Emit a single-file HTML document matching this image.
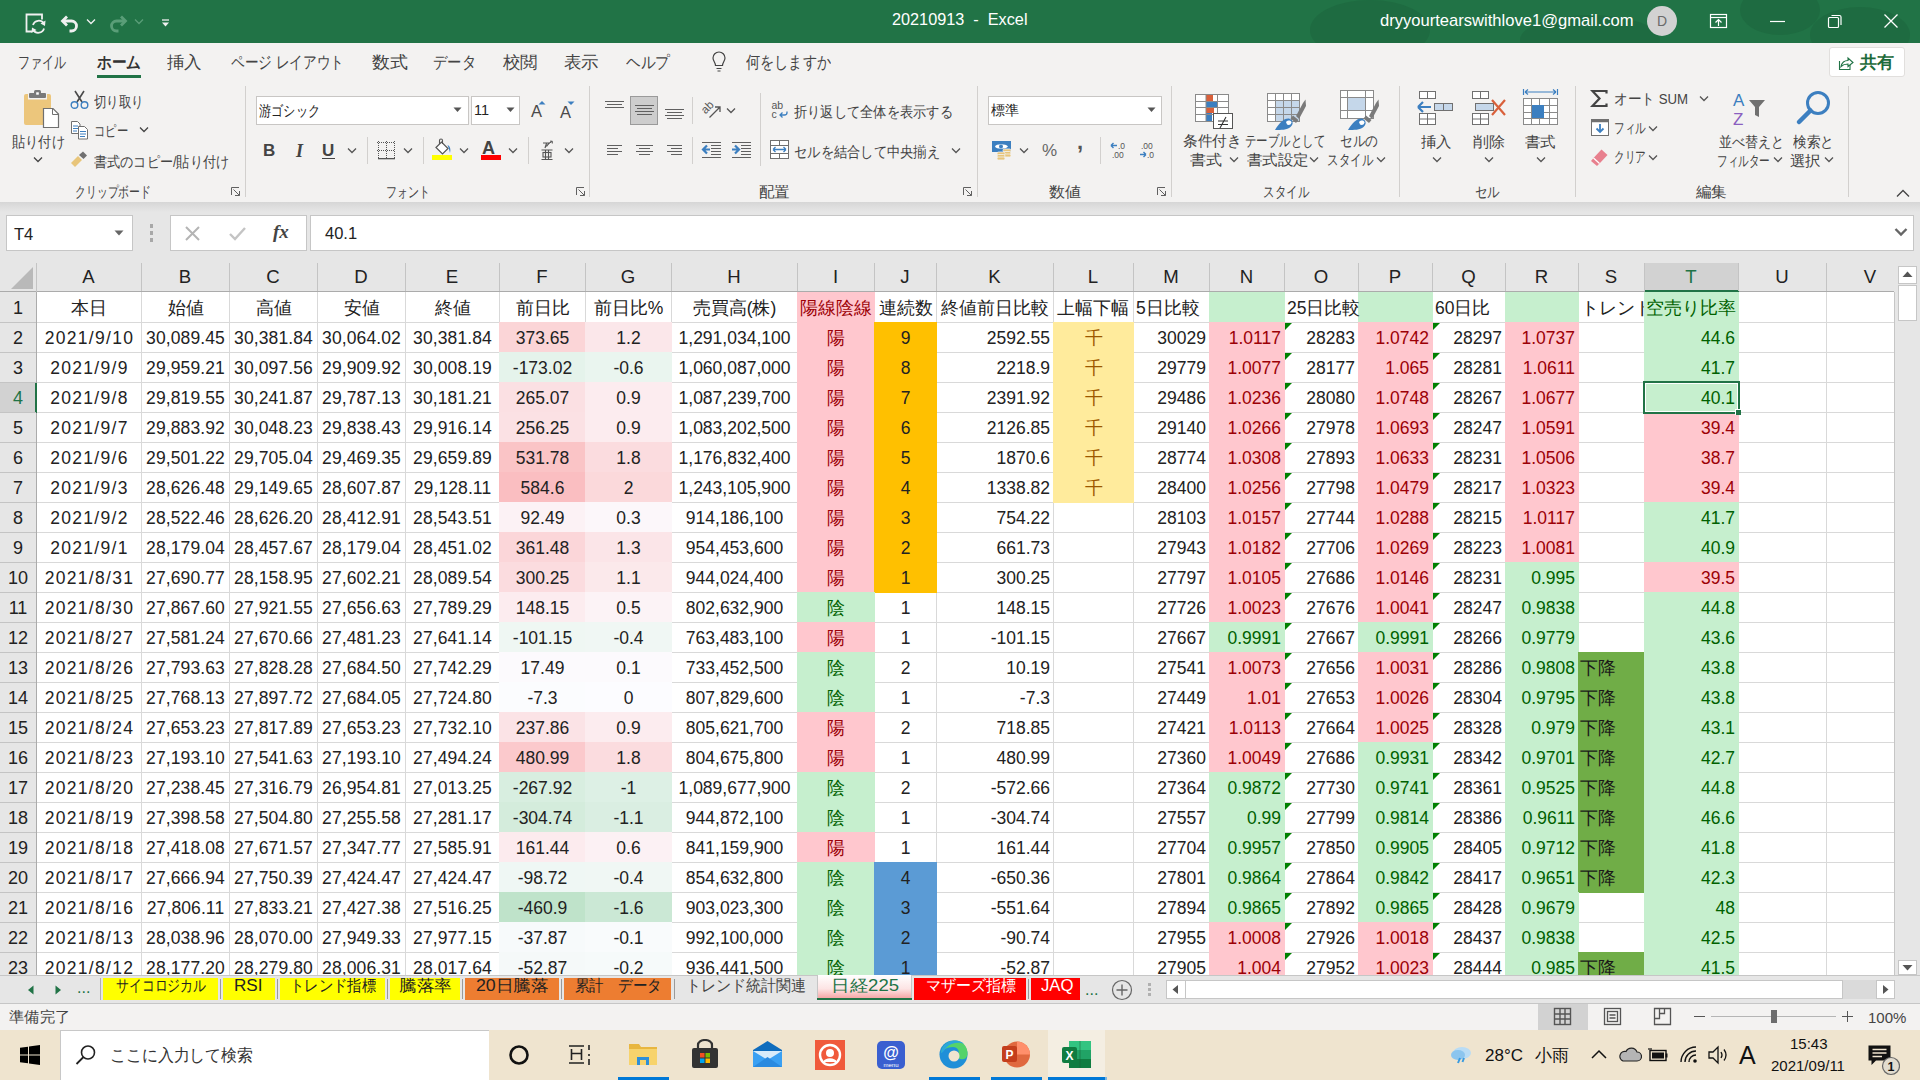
<!DOCTYPE html><html><head><meta charset="utf-8"><style>
*{margin:0;padding:0;box-sizing:border-box}
html,body{width:1920px;height:1080px;overflow:hidden;background:#fff;font-family:"Liberation Sans", sans-serif}
body>div,body>span{position:absolute}
.t{position:absolute;white-space:nowrap;line-height:1}
.c{position:absolute;white-space:nowrap;overflow:hidden;font-size:17.5px;line-height:30px;height:30px;color:#222}
.hl{position:absolute;background:#d4d4d4}
</style></head><body><div style="left:0px;top:0px;width:1920px;height:43px;background:#217346;overflow:hidden"></div>
<svg style="position:absolute;left:1300px;top:0px;" width="620" height="43" viewBox="0 0 620 43"><g fill="#1e6a40" opacity="0.8"><ellipse cx="70" cy="30" rx="60" ry="30"/><ellipse cx="290" cy="40" rx="70" ry="25"/><ellipse cx="480" cy="10" rx="40" ry="25"/><ellipse cx="560" cy="35" rx="50" ry="28"/></g></svg>
<svg style="position:absolute;left:24px;top:12px;" width="24" height="23" viewBox="0 0 24 23"><g fill="none" stroke="#f0f0f0" stroke-width="1.8"><path d="M8 19.5H2.5V2.5H18V7.5"/><path d="M9 13A6 6 0 0 1 19.8 11.5"/><path d="M20 16.5A6 6 0 0 1 9.2 18"/></g><path d="M21.5 8.5L21 14L16.5 11.5Z" fill="#f0f0f0"/><path d="M7.5 21L8 15.5L12.5 18Z" fill="#f0f0f0"/></svg>
<svg style="position:absolute;left:59px;top:14px;" width="22" height="19" viewBox="0 0 22 19"><path d="M8 2.5L3.5 7L8 11.5" fill="none" stroke="#f0f0f0" stroke-width="2.8" stroke-linejoin="miter"/><path d="M4 7H12.5a5 5 0 0 1 0 10H10.5" fill="none" stroke="#f0f0f0" stroke-width="2.8"/></svg>
<svg style="position:absolute;left:86px;top:18px;" width="10" height="7" viewBox="0 0 10 7"><path d="M1 1.5L5 5.5L9 1.5" fill="none" stroke="#f0f0f0" stroke-width="1.3"/></svg>
<svg style="position:absolute;left:107px;top:14px;" width="22" height="19" viewBox="0 0 22 19"><path d="M14 2.5L18.5 7L14 11.5" fill="none" stroke="#5a9e78" stroke-width="2.8" stroke-linejoin="miter"/><path d="M18 7H9.5a5 5 0 0 0 0 10H11.5" fill="none" stroke="#5a9e78" stroke-width="2.8"/></svg>
<svg style="position:absolute;left:134px;top:18px;" width="10" height="7" viewBox="0 0 10 7"><path d="M1 1.5L5 5.5L9 1.5" fill="none" stroke="#5a9e78" stroke-width="1.3"/></svg>
<svg style="position:absolute;left:161px;top:19px;" width="9" height="9" viewBox="0 0 9 9"><path d="M1 1H8" stroke="#f0f0f0" stroke-width="1.3"/><path d="M1 3.5H8L4.5 7.5Z" fill="#f0f0f0"/></svg>
<div class="t" id="m0" style="left:892px;top:11px;font-size:17px;color:#fff;white-space:pre;transform:scaleX(0.9558);transform-origin:0 0;">20210913  -  Excel</div>
<div class="t" id="m1" style="left:1380px;top:12px;font-size:17px;color:#fff;;transform:scaleX(0.9747);transform-origin:0 0;">dryyourtearswithlove1@gmail.com</div>
<div style="left:1647px;top:6px;width:30px;height:30px;border-radius:50%;background:#d2d2d2;color:#6a6a6a;font-size:14px;line-height:30px;text-align:center">D</div>
<svg style="position:absolute;left:1708px;top:11px;" width="22" height="20" viewBox="0 0 22 20"><g fill="none" stroke="#fff" stroke-width="1.2"><rect x="2.5" y="3.5" width="16" height="13"/><path d="M2.5 6.5H18.5"/><path d="M10.5 15V9M7.5 11.5L10.5 8.5L13.5 11.5"/></g></svg>
<svg style="position:absolute;left:1768px;top:14px;" width="20" height="14" viewBox="0 0 20 14"><path d="M2 7.5H17" stroke="#fff" stroke-width="1.2"/></svg>
<svg style="position:absolute;left:1825px;top:11px;" width="20" height="20" viewBox="0 0 20 20"><g fill="none" stroke="#fff" stroke-width="1.2"><rect x="3.5" y="6.5" width="10" height="10" rx="1"/><path d="M6.5 4.5H14.5a1.5 1.5 0 0 1 1.5 1.5V14"/></g></svg>
<svg style="position:absolute;left:1881px;top:11px;" width="20" height="20" viewBox="0 0 20 20"><path d="M3.5 3.5L16.5 16.5M16.5 3.5L3.5 16.5" stroke="#fff" stroke-width="1.3"/></svg>
<div style="left:0px;top:43px;width:1920px;height:159px;background:#f3f2f1"></div>
<div class="t" id="m2" style="left:18px;top:54px;font-size:17px;color:#444;;transform:scaleX(0.7059);transform-origin:0 0;">ファイル</div>
<div class="t" id="m3" style="left:97px;top:54px;font-size:17px;color:#333;font-weight:bold;;transform:scaleX(0.8627);transform-origin:0 0;">ホーム</div>
<div class="t" id="m4" style="left:167px;top:54px;font-size:17px;color:#444;;transform:scaleX(1.0294);transform-origin:0 0;">挿入</div>
<div class="t" id="m5" style="left:231px;top:54px;font-size:17px;color:#444;;transform:scaleX(0.8029);transform-origin:0 0;">ページ レイアウト</div>
<div class="t" id="m6" style="left:372px;top:54px;font-size:17px;color:#444;;transform:scaleX(1.0588);transform-origin:0 0;">数式</div>
<div class="t" id="m7" style="left:433px;top:54px;font-size:17px;color:#444;;transform:scaleX(0.8431);transform-origin:0 0;">データ</div>
<div class="t" id="m8" style="left:503px;top:54px;font-size:17px;color:#444;;transform:scaleX(1.0294);transform-origin:0 0;">校閲</div>
<div class="t" id="m9" style="left:564px;top:54px;font-size:17px;color:#444;;transform:scaleX(1.0294);transform-origin:0 0;">表示</div>
<div class="t" id="m10" style="left:626px;top:54px;font-size:17px;color:#444;;transform:scaleX(0.8627);transform-origin:0 0;">ヘルプ</div>
<div class="t" id="m11" style="left:746px;top:54px;font-size:17px;color:#444;;transform:scaleX(0.8333);transform-origin:0 0;">何をしますか</div>
<div style="left:97px;top:75px;width:44px;height:3px;background:#217346"></div>
<svg style="position:absolute;left:710px;top:51px;" width="18" height="22" viewBox="0 0 18 22"><g fill="none" stroke="#444" stroke-width="1.2"><path d="M5.5 14.5C5.5 11.5 3 10 3 7a6 6 0 0 1 12 0c0 3-2.5 4.5-2.5 7.5Z"/><path d="M6.5 17.5H11.5M7.5 20H10.5"/></g></svg>
<div style="left:1829px;top:47px;width:76px;height:30px;background:#fff;border:1px solid #e1dfdd;border-radius:3px"></div>
<svg style="position:absolute;left:1837px;top:53px;" width="20" height="20" viewBox="0 0 20 20"><g fill="none" stroke="#217346" stroke-width="1.1"><path d="M2.5 8V16.5H13V12"/><path d="M4 13.5C5 9 8 7.5 11 7.5V5L16 9.5L11 13.5V11C8 11 6 11.5 4 13.5Z"/></g></svg>
<div class="t" style="left:1860px;top:54px;font-size:17px;color:#1d6b3a;font-weight:bold">共有</div>
<div style="left:245px;top:86px;width:1px;height:111px;background:#d2d0ce"></div>
<div style="left:589px;top:86px;width:1px;height:111px;background:#d2d0ce"></div>
<div style="left:977px;top:86px;width:1px;height:111px;background:#d2d0ce"></div>
<div style="left:1171px;top:86px;width:1px;height:111px;background:#d2d0ce"></div>
<div style="left:1399px;top:86px;width:1px;height:111px;background:#d2d0ce"></div>
<div style="left:1575px;top:86px;width:1px;height:111px;background:#d2d0ce"></div>
<div style="left:1848px;top:86px;width:1px;height:111px;background:#d2d0ce"></div>
<svg style="position:absolute;left:20px;top:88px;" width="42" height="42" viewBox="0 0 42 42"><rect x="4" y="6" width="27" height="31" rx="2" fill="#ecc67c"/><rect x="8" y="4" width="19" height="7.5" fill="#f3f2f1"/><rect x="9" y="5" width="17" height="5" rx="1" fill="#7a7a7a"/><rect x="14" y="2" width="7" height="5" rx="1.5" fill="#7a7a7a"/><rect x="16.2" y="4.3" width="2.6" height="2.4" fill="#fff"/><path d="M23.5 20.5H33L38.5 26V39.5H23.5Z" fill="#fff" stroke="#707070" stroke-width="1.2"/><path d="M32.5 20.5V26.5H38.5" fill="none" stroke="#707070" stroke-width="1"/></svg>
<div class="t" id="m12" style="left:12px;top:135px;font-size:14.5px;color:#444;;transform:scaleX(0.8833);transform-origin:0 0;">貼り付け</div>
<svg style="position:absolute;left:33px;top:156px;" width="10" height="7" viewBox="0 0 10 7"><path d="M1 1.5L5 5.5L9 1.5" fill="none" stroke="#444" stroke-width="1.3"/></svg>
<svg style="position:absolute;left:70px;top:90px;" width="19" height="20" viewBox="0 0 19 20"><g fill="none" stroke="#4a4a4a" stroke-width="1.6"><path d="M5 1L12 12M14 1L7 12"/></g><g fill="none" stroke="#3c7fc0" stroke-width="1.4"><circle cx="4.5" cy="15" r="3.3"/><circle cx="14.5" cy="15" r="3.3"/></g></svg>
<div class="t" id="m13" style="left:94px;top:95px;font-size:14.5px;color:#444;;transform:scaleX(0.8333);transform-origin:0 0;">切り取り</div>
<svg style="position:absolute;left:70px;top:120px;" width="20" height="20" viewBox="0 0 20 20"><g fill="#fff" stroke="#707070" stroke-width="1"><path d="M1.5 1.5H7.5L10 4V13.5H1.5Z"/><path d="M8.5 6.5H14.5L17.5 9.5V19H8.5Z"/></g><g stroke="#3c7fc0" stroke-width="1"><path d="M3 6H8M3 8.5H8M3 11H7M10 11.5H16M10 14H16M10 16.5H15"/></g></svg>
<div class="t" id="m14" style="left:94px;top:124px;font-size:14.5px;color:#444;;transform:scaleX(0.7556);transform-origin:0 0;">コピー</div>
<svg style="position:absolute;left:139px;top:126px;" width="10" height="7" viewBox="0 0 10 7"><path d="M1 1.5L5 5.5L9 1.5" fill="none" stroke="#444" stroke-width="1.3"/></svg>
<svg style="position:absolute;left:70px;top:151px;" width="20" height="17" viewBox="0 0 20 17"><path d="M1 12L8 5L12 9L5 16Z" fill="#e8c57a"/><path d="M9 4L13 0.5L17 4.5L13.5 8Z" fill="#707070"/></svg>
<div class="t" id="m15" style="left:94px;top:155px;font-size:14.5px;color:#444;;transform:scaleX(0.8764);transform-origin:0 0;">書式のコピー/貼り付け</div>
<div class="t" id="m16" style="left:75px;top:185px;font-size:14.5px;color:#444;;transform:scaleX(0.7238);transform-origin:0 0;">クリップボード</div>
<svg style="position:absolute;left:230px;top:186px;" width="11" height="11" viewBox="0 0 11 11"><g fill="none" stroke="#606060" stroke-width="1"><path d="M1.5 9V1.5H9"/><path d="M3.5 3.5L9.5 9.5M5 9.5H9.5V5"/></g></svg>
<div style="left:256px;top:96px;width:213px;height:29px;background:#fff;border:1px solid #c8c6c4"></div>
<div class="t" id="m17" style="left:259px;top:104px;font-size:14.5px;color:#222;;transform:scaleX(0.8133);transform-origin:0 0;">游ゴシック</div>
<svg style="position:absolute;left:453px;top:107px;" width="9" height="6" viewBox="0 0 9 6"><path d="M0.5 0.5H8.5L4.5 5Z" fill="#555"/></svg>
<div style="left:471px;top:96px;width:49px;height:29px;background:#fff;border:1px solid #c8c6c4"></div>
<div class="t" style="left:474px;top:103px;font-size:14.5px;color:#222;">11</div>
<svg style="position:absolute;left:506px;top:107px;" width="9" height="6" viewBox="0 0 9 6"><path d="M0.5 0.5H8.5L4.5 5Z" fill="#555"/></svg>
<div class="t" style="left:531px;top:103px;font-size:16.5px;color:#4a4a4a;">A</div>
<svg style="position:absolute;left:538px;top:100px;" width="8" height="5" viewBox="0 0 8 5"><path d="M0.5 4.5L4 1L7.5 4.5Z" fill="#3c7fc0"/></svg>
<div class="t" style="left:560px;top:104px;font-size:16.5px;color:#4a4a4a;">A</div>
<svg style="position:absolute;left:567px;top:101px;" width="8" height="5" viewBox="0 0 8 5"><path d="M0.5 0.5L4 4L7.5 0.5Z" fill="#3c7fc0"/></svg>
<div class="t" style="left:263px;top:142px;font-size:17px;color:#444;font-weight:bold">B</div>
<div class="t" style="left:296px;top:142px;font-size:18px;color:#444;font-style:italic;font-family:'Liberation Serif',serif;font-weight:bold">I</div>
<div class="t" style="left:322px;top:142px;font-size:17px;color:#444;font-weight:bold">U</div>
<div style="left:322px;top:158px;width:13px;height:1px;background:#444"></div>
<svg style="position:absolute;left:347px;top:147px;" width="10" height="7" viewBox="0 0 10 7"><path d="M1 1.5L5 5.5L9 1.5" fill="none" stroke="#555" stroke-width="1.3"/></svg>
<svg style="position:absolute;left:403px;top:147px;" width="10" height="7" viewBox="0 0 10 7"><path d="M1 1.5L5 5.5L9 1.5" fill="none" stroke="#555" stroke-width="1.3"/></svg>
<svg style="position:absolute;left:459px;top:147px;" width="10" height="7" viewBox="0 0 10 7"><path d="M1 1.5L5 5.5L9 1.5" fill="none" stroke="#555" stroke-width="1.3"/></svg>
<svg style="position:absolute;left:508px;top:147px;" width="10" height="7" viewBox="0 0 10 7"><path d="M1 1.5L5 5.5L9 1.5" fill="none" stroke="#555" stroke-width="1.3"/></svg>
<svg style="position:absolute;left:564px;top:147px;" width="10" height="7" viewBox="0 0 10 7"><path d="M1 1.5L5 5.5L9 1.5" fill="none" stroke="#555" stroke-width="1.3"/></svg>
<div style="left:367px;top:137px;width:1px;height:27px;background:#d2d0ce"></div>
<div style="left:423px;top:137px;width:1px;height:27px;background:#d2d0ce"></div>
<div style="left:528px;top:137px;width:1px;height:27px;background:#d2d0ce"></div>
<svg style="position:absolute;left:377px;top:141px;" width="19" height="19" viewBox="0 0 19 19"><rect x="0" y="1" width="1" height="1" fill="#555"/><rect x="0" y="9" width="1" height="1" fill="#555"/><rect x="1" y="0" width="1" height="1" fill="#555"/><rect x="1" y="2" width="1" height="1" fill="#555"/><rect x="1" y="4" width="1" height="1" fill="#555"/><rect x="1" y="6" width="1" height="1" fill="#555"/><rect x="1" y="8" width="1" height="1" fill="#555"/><rect x="1" y="10" width="1" height="1" fill="#555"/><rect x="1" y="12" width="1" height="1" fill="#555"/><rect x="1" y="14" width="1" height="1" fill="#555"/><rect x="1" y="16" width="1" height="1" fill="#555"/><rect x="2" y="1" width="1" height="1" fill="#555"/><rect x="2" y="9" width="1" height="1" fill="#555"/><rect x="4" y="1" width="1" height="1" fill="#555"/><rect x="4" y="9" width="1" height="1" fill="#555"/><rect x="6" y="1" width="1" height="1" fill="#555"/><rect x="6" y="9" width="1" height="1" fill="#555"/><rect x="8" y="1" width="1" height="1" fill="#555"/><rect x="8" y="9" width="1" height="1" fill="#555"/><rect x="9" y="0" width="1" height="1" fill="#555"/><rect x="9" y="2" width="1" height="1" fill="#555"/><rect x="9" y="4" width="1" height="1" fill="#555"/><rect x="9" y="6" width="1" height="1" fill="#555"/><rect x="9" y="8" width="1" height="1" fill="#555"/><rect x="9" y="10" width="1" height="1" fill="#555"/><rect x="9" y="12" width="1" height="1" fill="#555"/><rect x="9" y="14" width="1" height="1" fill="#555"/><rect x="9" y="16" width="1" height="1" fill="#555"/><rect x="10" y="1" width="1" height="1" fill="#555"/><rect x="10" y="9" width="1" height="1" fill="#555"/><rect x="12" y="1" width="1" height="1" fill="#555"/><rect x="12" y="9" width="1" height="1" fill="#555"/><rect x="14" y="1" width="1" height="1" fill="#555"/><rect x="14" y="9" width="1" height="1" fill="#555"/><rect x="16" y="1" width="1" height="1" fill="#555"/><rect x="16" y="9" width="1" height="1" fill="#555"/><rect x="17" y="0" width="1" height="1" fill="#555"/><rect x="17" y="2" width="1" height="1" fill="#555"/><rect x="17" y="4" width="1" height="1" fill="#555"/><rect x="17" y="6" width="1" height="1" fill="#555"/><rect x="17" y="8" width="1" height="1" fill="#555"/><rect x="17" y="10" width="1" height="1" fill="#555"/><rect x="17" y="12" width="1" height="1" fill="#555"/><rect x="17" y="14" width="1" height="1" fill="#555"/><rect x="17" y="16" width="1" height="1" fill="#555"/><rect x="1" y="17" width="17" height="1.3" fill="#555"/></svg>
<svg style="position:absolute;left:431px;top:138px;" width="22" height="23" viewBox="0 0 22 23"><path d="M5 9.5L10.5 4L17 10.5L11.5 16Z" fill="#fff" stroke="#555" stroke-width="1.2"/><path d="M8.5 6V2.5A1.5 1.5 0 0 1 11.5 2.5V6" fill="none" stroke="#555" stroke-width="1.1"/><path d="M16.5 7C19 8 20 11 19 15L18 11Z" fill="#3c7fc0"/><rect x="1" y="17" width="20" height="5" fill="#ffff00"/></svg>
<div class="t" style="left:482px;top:139px;font-size:18px;color:#444;font-weight:bold">A</div>
<div style="left:481px;top:155px;width:20px;height:5px;background:#ff0000"></div>
<svg style="position:absolute;left:540px;top:140px;" width="14" height="21" viewBox="0 0 14 21"><path d="M3 3H9L6.5 6.5M6.5 3.5L5 8" fill="none" stroke="#555" stroke-width="1.2"/><path d="M8 4L12 1.5M10 1.2H12.3V3.5" fill="none" stroke="#555" stroke-width="1"/><g stroke="#555" stroke-width="1.1" fill="none"><path d="M1.5 10H12.5M1.5 19.5H12.5"/><rect x="3" y="12.5" width="8" height="4.5"/><path d="M5.5 10V19.5M8.5 10V19.5"/></g></svg>
<div class="t" id="m18" style="left:386px;top:185px;font-size:14.5px;color:#444;;transform:scaleX(0.7333);transform-origin:0 0;">フォント</div>
<svg style="position:absolute;left:575px;top:186px;" width="11" height="11" viewBox="0 0 11 11"><g fill="none" stroke="#606060" stroke-width="1"><path d="M1.5 9V1.5H9"/><path d="M3.5 3.5L9.5 9.5M5 9.5H9.5V5"/></g></svg>
<div style="left:630px;top:96px;width:28px;height:29px;background:#cdcdcd;border:1px solid #9a9a9a"></div>
<svg style="position:absolute;left:0;top:0" width="800" height="170" viewBox="0 0 800 170"><rect x="605" y="101" width="19" height="1" fill="#606060"/><rect x="607" y="104" width="15" height="1" fill="#606060"/><rect x="605" y="107" width="19" height="1" fill="#606060"/></svg>
<svg style="position:absolute;left:0;top:0" width="800" height="170" viewBox="0 0 800 170"><rect x="635" y="105" width="19" height="1" fill="#606060"/><rect x="637" y="108" width="15" height="1" fill="#606060"/><rect x="635" y="111" width="19" height="1" fill="#606060"/><rect x="637" y="114" width="15" height="1" fill="#606060"/></svg>
<svg style="position:absolute;left:0;top:0" width="800" height="170" viewBox="0 0 800 170"><rect x="665" y="109" width="19" height="1" fill="#606060"/><rect x="667" y="112" width="15" height="1" fill="#606060"/><rect x="665" y="115" width="19" height="1" fill="#606060"/><rect x="667" y="118" width="15" height="1" fill="#606060"/></svg>
<svg style="position:absolute;left:0;top:0" width="800" height="170" viewBox="0 0 800 170"><rect x="607" y="145" width="15" height="1" fill="#606060"/><rect x="607" y="148" width="11" height="1" fill="#606060"/><rect x="607" y="151" width="15" height="1" fill="#606060"/><rect x="607" y="154" width="11" height="1" fill="#606060"/></svg>
<svg style="position:absolute;left:0;top:0" width="800" height="170" viewBox="0 0 800 170"><rect x="636" y="145" width="17" height="1" fill="#606060"/><rect x="639" y="148" width="11" height="1" fill="#606060"/><rect x="636" y="151" width="17" height="1" fill="#606060"/><rect x="639" y="154" width="11" height="1" fill="#606060"/></svg>
<svg style="position:absolute;left:0;top:0" width="800" height="170" viewBox="0 0 800 170"><rect x="667" y="145" width="15" height="1" fill="#606060"/><rect x="671" y="148" width="11" height="1" fill="#606060"/><rect x="667" y="151" width="15" height="1" fill="#606060"/><rect x="671" y="154" width="11" height="1" fill="#606060"/></svg>
<svg style="position:absolute;left:0;top:0" width="800" height="170" viewBox="0 0 800 170"><rect x="702" y="142" width="19" height="1" fill="#606060"/><rect x="711" y="145" width="10" height="1" fill="#606060"/><rect x="711" y="148" width="10" height="1" fill="#606060"/><rect x="711" y="151" width="10" height="1" fill="#606060"/><rect x="711" y="154" width="10" height="1" fill="#606060"/><rect x="702" y="157" width="19" height="1" fill="#606060"/></svg>
<svg style="position:absolute;left:0;top:0" width="800" height="170" viewBox="0 0 800 170"><rect x="732" y="142" width="19" height="1" fill="#606060"/><rect x="741" y="145" width="10" height="1" fill="#606060"/><rect x="741" y="148" width="10" height="1" fill="#606060"/><rect x="741" y="151" width="10" height="1" fill="#606060"/><rect x="741" y="154" width="10" height="1" fill="#606060"/><rect x="732" y="157" width="19" height="1" fill="#606060"/></svg>
<svg style="position:absolute;left:701px;top:143px;" width="10" height="14" viewBox="0 0 10 14"><path d="M9 6.5H3M6 2.5L2 6.5L6 10.5" fill="none" stroke="#3c7fc0" stroke-width="2.2"/></svg>
<svg style="position:absolute;left:731px;top:143px;" width="10" height="14" viewBox="0 0 10 14"><path d="M1 6.5H7M4 2.5L8 6.5L4 10.5" fill="none" stroke="#3c7fc0" stroke-width="2.2"/></svg>
<div style="left:692px;top:97px;width:1px;height:27px;background:#d2d0ce"></div>
<div style="left:692px;top:137px;width:1px;height:27px;background:#d2d0ce"></div>
<svg style="position:absolute;left:700px;top:100px;" width="24" height="20" viewBox="0 0 24 20"><text x="0" y="0" font-size="11.5" fill="#555" font-family="Liberation Sans" transform="translate(5.5 14.5) rotate(-45)">ab</text><path d="M9.5 17.5L20 7M15 7H20V12" fill="none" stroke="#555" stroke-width="1.3"/></svg>
<svg style="position:absolute;left:726px;top:107px;" width="10" height="7" viewBox="0 0 10 7"><path d="M1 1.5L5 5.5L9 1.5" fill="none" stroke="#555" stroke-width="1.3"/></svg>
<div style="left:760px;top:93px;width:1px;height:73px;background:#d2d0ce"></div>
<svg style="position:absolute;left:771px;top:100px;" width="18" height="19" viewBox="0 0 18 19"><text x="0.5" y="9" font-size="10.5" fill="#555" font-family="Liberation Sans">ab</text><text x="0.5" y="17.5" font-size="10.5" fill="#555" font-family="Liberation Sans">c</text><path d="M16 11.5V12.5A2.5 2.5 0 0 1 13.5 15H9M11.5 12.5L9 15L11.5 17.5" fill="none" stroke="#3c7fc0" stroke-width="1.3"/></svg>
<div class="t" id="m19" style="left:794px;top:105px;font-size:14.5px;color:#444;;transform:scaleX(0.8833);transform-origin:0 0;">折り返して全体を表示する</div>
<svg style="position:absolute;left:769px;top:139px;" width="21" height="21" viewBox="0 0 21 21"><rect x="1.5" y="1.5" width="18" height="18" fill="#fff" stroke="#707070"/><path d="M1.5 6.5H19.5M1.5 14.5H19.5M10.5 1.5V6.5M10.5 14.5V19.5" stroke="#707070"/><path d="M4 10.5H17M4 10.5L6.5 8M4 10.5L6.5 13M17 10.5L14.5 8M17 10.5L14.5 13" fill="none" stroke="#3c7fc0" stroke-width="1.3"/></svg>
<div class="t" id="m20" style="left:794px;top:145px;font-size:14.5px;color:#444;;transform:scaleX(0.8848);transform-origin:0 0;">セルを結合して中央揃え</div>
<svg style="position:absolute;left:951px;top:147px;" width="10" height="7" viewBox="0 0 10 7"><path d="M1 1.5L5 5.5L9 1.5" fill="none" stroke="#555" stroke-width="1.3"/></svg>
<div class="t" id="m21" style="left:759px;top:185px;font-size:14.5px;color:#444;;transform:scaleX(1.0333);transform-origin:0 0;">配置</div>
<svg style="position:absolute;left:962px;top:186px;" width="11" height="11" viewBox="0 0 11 11"><g fill="none" stroke="#606060" stroke-width="1"><path d="M1.5 9V1.5H9"/><path d="M3.5 3.5L9.5 9.5M5 9.5H9.5V5"/></g></svg>
<div style="left:988px;top:96px;width:174px;height:29px;background:#fff;border:1px solid #c8c6c4"></div>
<div class="t" style="left:991px;top:103px;font-size:14px;color:#222;">標準</div>
<svg style="position:absolute;left:1147px;top:107px;" width="9" height="6" viewBox="0 0 9 6"><path d="M0.5 0.5H8.5L4.5 5Z" fill="#555"/></svg>
<svg style="position:absolute;left:991px;top:140px;" width="22" height="21" viewBox="0 0 22 21"><rect x="1" y="1" width="19" height="11" fill="#3c7fc0"/><path d="M4 6.5C5 3.5 15 3.5 17 6.5C15 9.5 5 9.5 4 6.5Z" fill="#fff"/><circle cx="10" cy="6.5" r="2" fill="#3c7fc0"/><g fill="#e8c57a" stroke="#f3f2f1" stroke-width="0.8"><rect x="12" y="9" width="8" height="3" rx="1.5"/><rect x="12" y="11.5" width="8" height="3" rx="1.5"/><rect x="12" y="14" width="8" height="3" rx="1.5"/><rect x="6" y="12" width="8" height="3" rx="1.5"/><rect x="6" y="14.5" width="8" height="3" rx="1.5"/><rect x="6" y="17" width="8" height="3" rx="1.5"/></g></svg>
<svg style="position:absolute;left:1019px;top:147px;" width="10" height="7" viewBox="0 0 10 7"><path d="M1 1.5L5 5.5L9 1.5" fill="none" stroke="#555" stroke-width="1.3"/></svg>
<div class="t" style="left:1042px;top:142px;font-size:17px;color:#666;">%</div>
<div class="t" style="left:1077px;top:131px;font-size:22px;color:#555;font-weight:bold">,</div>
<div style="left:1100px;top:137px;width:1px;height:27px;background:#d2d0ce"></div>
<svg style="position:absolute;left:1110px;top:141px;" width="20" height="18" viewBox="0 0 20 18"><path d="M1 4.5H7M1 4.5L3.5 2M1 4.5L3.5 7" stroke="#3c7fc0" stroke-width="1.4" fill="none"/><text x="8" y="8" font-size="8.5" fill="#555" font-family="Liberation Sans">.0</text><text x="2" y="17" font-size="8.5" fill="#555" font-family="Liberation Sans">.00</text></svg>
<svg style="position:absolute;left:1139px;top:141px;" width="20" height="18" viewBox="0 0 20 18"><text x="2" y="8" font-size="8.5" fill="#555" font-family="Liberation Sans">.00</text><path d="M1 13.5H7M7 13.5L4.5 11M7 13.5L4.5 16" stroke="#3c7fc0" stroke-width="1.4" fill="none"/><text x="8" y="17" font-size="8.5" fill="#555" font-family="Liberation Sans">.0</text></svg>
<div class="t" id="m22" style="left:1049px;top:185px;font-size:14.5px;color:#444;;transform:scaleX(1.0667);transform-origin:0 0;">数値</div>
<svg style="position:absolute;left:1156px;top:186px;" width="11" height="11" viewBox="0 0 11 11"><g fill="none" stroke="#606060" stroke-width="1"><path d="M1.5 9V1.5H9"/><path d="M3.5 3.5L9.5 9.5M5 9.5H9.5V5"/></g></svg>
<svg style="position:absolute;left:1195px;top:94px;" width="40" height="36" viewBox="0 0 40 36"><g fill="#fff" stroke="#8a8a8a" stroke-width="1"><rect x="0.5" y="0.5" width="33" height="27"/></g><rect x="11" y="1" width="7" height="6" fill="#d9603b"/><rect x="11" y="7" width="11" height="6" fill="#3c7fc0"/><rect x="11" y="13" width="8" height="6" fill="#d9603b"/><rect x="11" y="19" width="6" height="8" fill="#3c7fc0"/><g stroke="#8a8a8a" stroke-width="1"><path d="M0.5 7.5H33.5M0.5 13.5H33.5M0.5 20.5H33.5M11 0.5V27.5M22.5 0.5V27.5"/></g><rect x="18.5" y="19.5" width="19" height="15" fill="#fff" stroke="#555" stroke-width="1"/><path d="M23 27H33M23 30.5H33M31 23L25 34" stroke="#333" stroke-width="1.1"/></svg>
<svg style="position:absolute;left:1267px;top:93px;" width="40" height="38" viewBox="0 0 40 38"><g fill="#fff" stroke="#8a8a8a" stroke-width="1"><rect x="0.5" y="0.5" width="32" height="28"/></g><rect x="9" y="8" width="23" height="20" fill="#c5d7ea"/><g stroke="#8a8a8a" stroke-width="1"><path d="M0.5 7.5H32.5M0.5 14.5H32.5M0.5 21.5H32.5M8.5 0.5V28.5M16.5 0.5V28.5M24.5 0.5V28.5"/></g><path d="M29 23L36 10L38.5 6.5L39 13L32 26Z" fill="#7a7a7a"/><path d="M26 22.5L31.5 27L29 30L23.5 25.5Z" fill="#7a7a7a"/><path d="M8 37C12 30 17 25 22 25.5C26 27 27 31 23.5 34C20 37 14 37 8 37Z" fill="#3c7fc0"/><path d="M19 29C21 27 24 27 24.5 29.5C24 32 21.5 32.5 20 31.5Z" fill="#fff"/></svg>
<svg style="position:absolute;left:1340px;top:90px;" width="42" height="40" viewBox="0 0 42 40"><g fill="#fff" stroke="#8a8a8a" stroke-width="1"><rect x="0.5" y="0.5" width="33" height="28"/></g><rect x="7.5" y="7.5" width="18" height="13" fill="#c5d7ea" stroke="#8a8a8a"/><g stroke="#8a8a8a" stroke-width="1"><path d="M0.5 7.5H33.5M0.5 20.5H33.5M7.5 0.5V28.5M25.5 0.5V28.5"/></g><g transform="translate(0,3)"><path d="M29 23L36 10L38.5 6.5L39 13L32 26Z" fill="#7a7a7a"/><path d="M26 22.5L31.5 27L29 30L23.5 25.5Z" fill="#7a7a7a"/><path d="M8 37C12 30 17 25 22 25.5C26 27 27 31 23.5 34C20 37 14 37 8 37Z" fill="#3c7fc0"/><path d="M19 29C21 27 24 27 24.5 29.5C24 32 21.5 32.5 20 31.5Z" fill="#fff"/></g></svg>
<div class="t" id="m23" style="left:1183px;top:134px;font-size:14.5px;color:#444;;transform:scaleX(0.9833);transform-origin:0 0;">条件付き</div>
<div class="t" id="m24" style="left:1190px;top:153px;font-size:14.5px;color:#444;;transform:scaleX(1.0667);transform-origin:0 0;">書式</div>
<svg style="position:absolute;left:1229px;top:156px;" width="10" height="7" viewBox="0 0 10 7"><path d="M1 1.5L5 5.5L9 1.5" fill="none" stroke="#555" stroke-width="1.3"/></svg>
<div class="t" id="m25" style="left:1245px;top:134px;font-size:14.5px;color:#444;;transform:scaleX(0.7619);transform-origin:0 0;">テーブルとして</div>
<div class="t" id="m26" style="left:1247px;top:153px;font-size:14.5px;color:#444;;transform:scaleX(1.0333);transform-origin:0 0;">書式設定</div>
<svg style="position:absolute;left:1309px;top:156px;" width="10" height="7" viewBox="0 0 10 7"><path d="M1 1.5L5 5.5L9 1.5" fill="none" stroke="#555" stroke-width="1.3"/></svg>
<div class="t" id="m27" style="left:1340px;top:134px;font-size:14.5px;color:#444;;transform:scaleX(0.8444);transform-origin:0 0;">セルの</div>
<div class="t" id="m28" style="left:1327px;top:153px;font-size:14.5px;color:#444;;transform:scaleX(0.7667);transform-origin:0 0;">スタイル</div>
<svg style="position:absolute;left:1376px;top:156px;" width="10" height="7" viewBox="0 0 10 7"><path d="M1 1.5L5 5.5L9 1.5" fill="none" stroke="#555" stroke-width="1.3"/></svg>
<div class="t" id="m29" style="left:1263px;top:185px;font-size:14.5px;color:#444;;transform:scaleX(0.7667);transform-origin:0 0;">スタイル</div>
<svg style="position:absolute;left:1416px;top:90px;" width="38" height="36" viewBox="0 0 38 36"><g fill="#fff" stroke="#707070" stroke-width="1"><rect x="3.5" y="1.5" width="16" height="7"/><path d="M11.5 1.5V8.5"/><rect x="3.5" y="23.5" width="16" height="11"/><path d="M11.5 23.5V34.5M3.5 29H19.5"/></g><rect x="18.5" y="13.5" width="18" height="7" fill="#c5d7ea" stroke="#707070"/><path d="M27.5 13.5V20.5" stroke="#707070"/><path d="M2 17H15M2 17L7 12M2 17L7 22" stroke="#3c7fc0" stroke-width="2.2" fill="none"/></svg>
<svg style="position:absolute;left:1470px;top:90px;" width="38" height="36" viewBox="0 0 38 36"><g fill="#fff" stroke="#707070" stroke-width="1"><rect x="2.5" y="1.5" width="16" height="7"/><path d="M10.5 1.5V8.5"/><rect x="2.5" y="23.5" width="16" height="11"/><path d="M10.5 23.5V34.5M2.5 29H18.5"/></g><rect x="5.5" y="13.5" width="18" height="7" fill="#c5d7ea" stroke="#707070"/><path d="M22 10L35 25M35 10L22 25" stroke="#d9603b" stroke-width="2.2"/></svg>
<svg style="position:absolute;left:1521px;top:88px;" width="40" height="40" viewBox="0 0 40 40"><path d="M4 4H35M4 4L7 1.5M4 4L7 6.5M35 4L32 1.5M35 4L32 6.5M2.5 1V7M36.5 1V7" stroke="#3c7fc0" stroke-width="1.2" fill="none"/><g fill="#fff" stroke="#8a8a8a" stroke-width="1"><rect x="2.5" y="10.5" width="34" height="26"/></g><g stroke="#8a8a8a" stroke-width="1"><path d="M2.5 17.5H36.5M2.5 24.5H36.5M2.5 30.5H36.5M10.5 10.5V36.5M18.5 10.5V36.5M28.5 10.5V36.5"/></g><rect x="11" y="17" width="12" height="13" fill="#3c7fc0"/></svg>
<div class="t" id="m30" style="left:1421px;top:135px;font-size:14.5px;color:#444;;transform:scaleX(1.0333);transform-origin:0 0;">挿入</div>
<div class="t" id="m31" style="left:1473px;top:135px;font-size:14.5px;color:#444;;transform:scaleX(1.0667);transform-origin:0 0;">削除</div>
<div class="t" id="m32" style="left:1525px;top:135px;font-size:14.5px;color:#444;;transform:scaleX(1.0333);transform-origin:0 0;">書式</div>
<svg style="position:absolute;left:1432px;top:156px;" width="10" height="7" viewBox="0 0 10 7"><path d="M1 1.5L5 5.5L9 1.5" fill="none" stroke="#555" stroke-width="1.3"/></svg>
<svg style="position:absolute;left:1484px;top:156px;" width="10" height="7" viewBox="0 0 10 7"><path d="M1 1.5L5 5.5L9 1.5" fill="none" stroke="#555" stroke-width="1.3"/></svg>
<svg style="position:absolute;left:1536px;top:156px;" width="10" height="7" viewBox="0 0 10 7"><path d="M1 1.5L5 5.5L9 1.5" fill="none" stroke="#555" stroke-width="1.3"/></svg>
<div class="t" id="m33" style="left:1475px;top:185px;font-size:14.5px;color:#444;;transform:scaleX(0.8333);transform-origin:0 0;">セル</div>
<svg style="position:absolute;left:1590px;top:89px;" width="20" height="19" viewBox="0 0 20 19"><path d="M16.5 4.5V2H2.5L9.5 9.5L2.5 17H16.5V14.5" fill="none" stroke="#444" stroke-width="2.2" stroke-linejoin="miter"/></svg>
<div class="t" id="m34" style="left:1614px;top:92px;font-size:14.5px;color:#444;;transform:scaleX(0.9108);transform-origin:0 0;">オート SUM</div>
<svg style="position:absolute;left:1699px;top:95px;" width="10" height="7" viewBox="0 0 10 7"><path d="M1 1.5L5 5.5L9 1.5" fill="none" stroke="#555" stroke-width="1.3"/></svg>
<svg style="position:absolute;left:1590px;top:117px;" width="20" height="20" viewBox="0 0 20 20"><rect x="1.5" y="2.5" width="17" height="16" fill="#fff" stroke="#707070"/><path d="M1.5 4H18.5" stroke="#707070" stroke-width="2.5"/><path d="M10 7V15M6.5 11.5L10 15L13.5 11.5" stroke="#3c7fc0" stroke-width="1.8" fill="none"/></svg>
<div class="t" id="m35" style="left:1614px;top:121px;font-size:14.5px;color:#444;;transform:scaleX(0.7111);transform-origin:0 0;">フィル</div>
<svg style="position:absolute;left:1648px;top:125px;" width="10" height="7" viewBox="0 0 10 7"><path d="M1 1.5L5 5.5L9 1.5" fill="none" stroke="#555" stroke-width="1.3"/></svg>
<svg style="position:absolute;left:1590px;top:147px;" width="20" height="19" viewBox="0 0 20 19"><path d="M3.5 11L11.5 2.5L17.5 8L9.5 16.5Z" fill="#e8808e"/><path d="M1 14L3.5 11L9.5 16.5L7 19Z" fill="#e8808e"/><path d="M3.5 11L9.5 16.5" stroke="#fff" stroke-width="1.2"/></svg>
<div class="t" id="m36" style="left:1614px;top:150px;font-size:14.5px;color:#444;;transform:scaleX(0.7111);transform-origin:0 0;">クリア</div>
<svg style="position:absolute;left:1648px;top:154px;" width="10" height="7" viewBox="0 0 10 7"><path d="M1 1.5L5 5.5L9 1.5" fill="none" stroke="#555" stroke-width="1.3"/></svg>
<svg style="position:absolute;left:1731px;top:90px;" width="40" height="38" viewBox="0 0 40 38"><text x="2" y="16" font-size="17" fill="#3c7fc0" font-family="Liberation Sans">A</text><text x="2" y="35" font-size="17" fill="#8b5fc0" font-family="Liberation Sans">Z</text><path d="M18 10H34L28 17V27L24 25V17Z" fill="#707070"/></svg>
<svg style="position:absolute;left:1795px;top:89px;" width="38" height="40" viewBox="0 0 38 40"><circle cx="23" cy="14" r="10.5" fill="none" stroke="#3c7fc0" stroke-width="3"/><path d="M15.5 21.5L4 33" stroke="#3c7fc0" stroke-width="4.5" stroke-linecap="round"/></svg>
<div class="t" id="m37" style="left:1719px;top:135px;font-size:14.5px;color:#444;;transform:scaleX(0.8667);transform-origin:0 0;">並べ替えと</div>
<div class="t" id="m38" style="left:1717px;top:154px;font-size:14.5px;color:#444;;transform:scaleX(0.7067);transform-origin:0 0;">フィルター</div>
<svg style="position:absolute;left:1773px;top:156px;" width="10" height="7" viewBox="0 0 10 7"><path d="M1 1.5L5 5.5L9 1.5" fill="none" stroke="#555" stroke-width="1.3"/></svg>
<div class="t" id="m39" style="left:1793px;top:135px;font-size:14.5px;color:#444;;transform:scaleX(0.9111);transform-origin:0 0;">検索と</div>
<div class="t" id="m40" style="left:1790px;top:154px;font-size:14.5px;color:#444;;transform:scaleX(1.0333);transform-origin:0 0;">選択</div>
<svg style="position:absolute;left:1824px;top:156px;" width="10" height="7" viewBox="0 0 10 7"><path d="M1 1.5L5 5.5L9 1.5" fill="none" stroke="#555" stroke-width="1.3"/></svg>
<div class="t" id="m41" style="left:1696px;top:185px;font-size:14.5px;color:#444;;transform:scaleX(1.0333);transform-origin:0 0;">編集</div>
<svg style="position:absolute;left:1896px;top:189px;" width="14" height="9" viewBox="0 0 14 9"><path d="M1 7.5L7 1.5L13 7.5" fill="none" stroke="#444" stroke-width="1.3"/></svg>
<div style="left:0px;top:202px;width:1920px;height:10px;background:linear-gradient(#d6d6d6,#e6e6e6)"></div>
<div style="left:0px;top:212px;width:1920px;height:51px;background:#e6e6e6"></div>
<div style="left:6px;top:215px;width:127px;height:36px;background:#fff;border:1px solid #c6c6c6"></div>
<div class="t" style="left:14px;top:226px;font-size:16.5px;color:#222;">T4</div>
<svg style="position:absolute;left:114px;top:230px;" width="10" height="6" viewBox="0 0 10 6"><path d="M0.5 0.5H9.5L5 5.5Z" fill="#666"/></svg>
<div style="left:150px;top:224px;width:3px;height:4px;background:#a8a8a8"></div>
<div style="left:150px;top:231px;width:3px;height:4px;background:#a8a8a8"></div>
<div style="left:150px;top:238px;width:3px;height:4px;background:#a8a8a8"></div>
<div style="left:170px;top:215px;width:137px;height:36px;background:#fff;border:1px solid #c6c6c6"></div>
<svg style="position:absolute;left:184px;top:225px;" width="18" height="18" viewBox="0 0 18 18"><path d="M2 2L15 15M15 2L2 15" stroke="#b4b4b4" stroke-width="2"/></svg>
<svg style="position:absolute;left:228px;top:226px;" width="20" height="16" viewBox="0 0 20 16"><path d="M2 8L7 13L17 2" fill="none" stroke="#c4c4c4" stroke-width="2.4"/></svg>
<div class="t" style="left:273px;top:222px;font-size:19px;color:#444;font-family:'Liberation Serif',serif;font-style:italic;font-weight:bold">fx</div>
<div style="left:310px;top:215px;width:1604px;height:36px;background:#fff;border:1px solid #c6c6c6"></div>
<div class="t" style="left:325px;top:225px;font-size:16.5px;color:#222;">40.1</div>
<svg style="position:absolute;left:1894px;top:227px;" width="14" height="10" viewBox="0 0 14 10"><path d="M1.5 2L7 7.5L12.5 2" fill="none" stroke="#666" stroke-width="2.4"/></svg>
<div style="left:0px;top:263px;width:1897px;height:29px;background:#e6e6e6"></div>
<div style="left:0px;top:291px;width:1895px;height:1px;background:#ababab"></div>
<svg style="position:absolute;left:0px;top:263px;" width="36" height="29" viewBox="0 0 36 29"><path d="M33 4V26H11Z" fill="#b9b9b9"/></svg>
<div style="left:36px;top:263px;width:1px;height:29px;background:#c4c4c4"></div>
<div style="left:141px;top:263px;width:1px;height:28px;background:#c4c4c4"></div>
<div class="t" style="left:36px;top:267.5px;width:105px;text-align:center;font-size:18.6px;color:#222">A</div>
<div style="left:229px;top:263px;width:1px;height:28px;background:#c4c4c4"></div>
<div class="t" style="left:141px;top:267.5px;width:88px;text-align:center;font-size:18.6px;color:#222">B</div>
<div style="left:317px;top:263px;width:1px;height:28px;background:#c4c4c4"></div>
<div class="t" style="left:229px;top:267.5px;width:88px;text-align:center;font-size:18.6px;color:#222">C</div>
<div style="left:405px;top:263px;width:1px;height:28px;background:#c4c4c4"></div>
<div class="t" style="left:317px;top:267.5px;width:88px;text-align:center;font-size:18.6px;color:#222">D</div>
<div style="left:499px;top:263px;width:1px;height:28px;background:#c4c4c4"></div>
<div class="t" style="left:405px;top:267.5px;width:94px;text-align:center;font-size:18.6px;color:#222">E</div>
<div style="left:585px;top:263px;width:1px;height:28px;background:#c4c4c4"></div>
<div class="t" style="left:499px;top:267.5px;width:86px;text-align:center;font-size:18.6px;color:#222">F</div>
<div style="left:671px;top:263px;width:1px;height:28px;background:#c4c4c4"></div>
<div class="t" style="left:585px;top:267.5px;width:86px;text-align:center;font-size:18.6px;color:#222">G</div>
<div style="left:797px;top:263px;width:1px;height:28px;background:#c4c4c4"></div>
<div class="t" style="left:671px;top:267.5px;width:126px;text-align:center;font-size:18.6px;color:#222">H</div>
<div style="left:874px;top:263px;width:1px;height:28px;background:#c4c4c4"></div>
<div class="t" style="left:797px;top:267.5px;width:77px;text-align:center;font-size:18.6px;color:#222">I</div>
<div style="left:936px;top:263px;width:1px;height:28px;background:#c4c4c4"></div>
<div class="t" style="left:874px;top:267.5px;width:62px;text-align:center;font-size:18.6px;color:#222">J</div>
<div style="left:1053px;top:263px;width:1px;height:28px;background:#c4c4c4"></div>
<div class="t" style="left:936px;top:267.5px;width:117px;text-align:center;font-size:18.6px;color:#222">K</div>
<div style="left:1133px;top:263px;width:1px;height:28px;background:#c4c4c4"></div>
<div class="t" style="left:1053px;top:267.5px;width:80px;text-align:center;font-size:18.6px;color:#222">L</div>
<div style="left:1209px;top:263px;width:1px;height:28px;background:#c4c4c4"></div>
<div class="t" style="left:1133px;top:267.5px;width:76px;text-align:center;font-size:18.6px;color:#222">M</div>
<div style="left:1284px;top:263px;width:1px;height:28px;background:#c4c4c4"></div>
<div class="t" style="left:1209px;top:267.5px;width:75px;text-align:center;font-size:18.6px;color:#222">N</div>
<div style="left:1358px;top:263px;width:1px;height:28px;background:#c4c4c4"></div>
<div class="t" style="left:1284px;top:267.5px;width:74px;text-align:center;font-size:18.6px;color:#222">O</div>
<div style="left:1432px;top:263px;width:1px;height:28px;background:#c4c4c4"></div>
<div class="t" style="left:1358px;top:267.5px;width:74px;text-align:center;font-size:18.6px;color:#222">P</div>
<div style="left:1505px;top:263px;width:1px;height:28px;background:#c4c4c4"></div>
<div class="t" style="left:1432px;top:267.5px;width:73px;text-align:center;font-size:18.6px;color:#222">Q</div>
<div style="left:1578px;top:263px;width:1px;height:28px;background:#c4c4c4"></div>
<div class="t" style="left:1505px;top:267.5px;width:73px;text-align:center;font-size:18.6px;color:#222">R</div>
<div style="left:1644px;top:263px;width:1px;height:28px;background:#c4c4c4"></div>
<div class="t" style="left:1578px;top:267.5px;width:66px;text-align:center;font-size:18.6px;color:#222">S</div>
<div style="left:1645px;top:263px;width:94px;height:29px;background:#d2d2d2"></div>
<div style="left:1645px;top:290px;width:94px;height:2px;background:#217346"></div>
<div style="left:1738px;top:263px;width:1px;height:28px;background:#c4c4c4"></div>
<div class="t" style="left:1644px;top:267.5px;width:94px;text-align:center;font-size:18.6px;color:#217346">T</div>
<div style="left:1826px;top:263px;width:1px;height:28px;background:#c4c4c4"></div>
<div class="t" style="left:1738px;top:267.5px;width:88px;text-align:center;font-size:18.6px;color:#222">U</div>
<div class="t" style="left:1826px;top:267.5px;width:88px;text-align:center;font-size:18.6px;color:#222">V</div>
<div style="left:0px;top:292px;width:37px;height:683px;background:#e6e6e6"></div>
<div style="left:36px;top:292px;width:1px;height:683px;background:#ababab"></div>
<div style="left:0px;top:322px;width:36px;height:1px;background:#c4c4c4"></div>
<div class="c" style="left:0px;top:293px;width:36px;text-align:center;font-size:18px;color:#222">1</div>
<div style="left:0px;top:352px;width:36px;height:1px;background:#c4c4c4"></div>
<div class="c" style="left:0px;top:323px;width:36px;text-align:center;font-size:18px;color:#222">2</div>
<div style="left:0px;top:382px;width:36px;height:1px;background:#c4c4c4"></div>
<div class="c" style="left:0px;top:353px;width:36px;text-align:center;font-size:18px;color:#222">3</div>
<div style="left:0px;top:383px;width:36px;height:30px;background:#d2d2d2"></div>
<div style="left:35px;top:383px;width:2px;height:30px;background:#217346"></div>
<div style="left:0px;top:412px;width:36px;height:1px;background:#c4c4c4"></div>
<div class="c" style="left:0px;top:383px;width:36px;text-align:center;font-size:18px;color:#217346">4</div>
<div style="left:0px;top:442px;width:36px;height:1px;background:#c4c4c4"></div>
<div class="c" style="left:0px;top:413px;width:36px;text-align:center;font-size:18px;color:#222">5</div>
<div style="left:0px;top:472px;width:36px;height:1px;background:#c4c4c4"></div>
<div class="c" style="left:0px;top:443px;width:36px;text-align:center;font-size:18px;color:#222">6</div>
<div style="left:0px;top:502px;width:36px;height:1px;background:#c4c4c4"></div>
<div class="c" style="left:0px;top:473px;width:36px;text-align:center;font-size:18px;color:#222">7</div>
<div style="left:0px;top:532px;width:36px;height:1px;background:#c4c4c4"></div>
<div class="c" style="left:0px;top:503px;width:36px;text-align:center;font-size:18px;color:#222">8</div>
<div style="left:0px;top:562px;width:36px;height:1px;background:#c4c4c4"></div>
<div class="c" style="left:0px;top:533px;width:36px;text-align:center;font-size:18px;color:#222">9</div>
<div style="left:0px;top:592px;width:36px;height:1px;background:#c4c4c4"></div>
<div class="c" style="left:0px;top:563px;width:36px;text-align:center;font-size:18px;color:#222">10</div>
<div style="left:0px;top:622px;width:36px;height:1px;background:#c4c4c4"></div>
<div class="c" style="left:0px;top:593px;width:36px;text-align:center;font-size:18px;color:#222">11</div>
<div style="left:0px;top:652px;width:36px;height:1px;background:#c4c4c4"></div>
<div class="c" style="left:0px;top:623px;width:36px;text-align:center;font-size:18px;color:#222">12</div>
<div style="left:0px;top:682px;width:36px;height:1px;background:#c4c4c4"></div>
<div class="c" style="left:0px;top:653px;width:36px;text-align:center;font-size:18px;color:#222">13</div>
<div style="left:0px;top:712px;width:36px;height:1px;background:#c4c4c4"></div>
<div class="c" style="left:0px;top:683px;width:36px;text-align:center;font-size:18px;color:#222">14</div>
<div style="left:0px;top:742px;width:36px;height:1px;background:#c4c4c4"></div>
<div class="c" style="left:0px;top:713px;width:36px;text-align:center;font-size:18px;color:#222">15</div>
<div style="left:0px;top:772px;width:36px;height:1px;background:#c4c4c4"></div>
<div class="c" style="left:0px;top:743px;width:36px;text-align:center;font-size:18px;color:#222">16</div>
<div style="left:0px;top:802px;width:36px;height:1px;background:#c4c4c4"></div>
<div class="c" style="left:0px;top:773px;width:36px;text-align:center;font-size:18px;color:#222">17</div>
<div style="left:0px;top:832px;width:36px;height:1px;background:#c4c4c4"></div>
<div class="c" style="left:0px;top:803px;width:36px;text-align:center;font-size:18px;color:#222">18</div>
<div style="left:0px;top:862px;width:36px;height:1px;background:#c4c4c4"></div>
<div class="c" style="left:0px;top:833px;width:36px;text-align:center;font-size:18px;color:#222">19</div>
<div style="left:0px;top:892px;width:36px;height:1px;background:#c4c4c4"></div>
<div class="c" style="left:0px;top:863px;width:36px;text-align:center;font-size:18px;color:#222">20</div>
<div style="left:0px;top:922px;width:36px;height:1px;background:#c4c4c4"></div>
<div class="c" style="left:0px;top:893px;width:36px;text-align:center;font-size:18px;color:#222">21</div>
<div style="left:0px;top:952px;width:36px;height:1px;background:#c4c4c4"></div>
<div class="c" style="left:0px;top:923px;width:36px;text-align:center;font-size:18px;color:#222">22</div>
<div class="c" style="left:0px;top:953px;width:36px;text-align:center;font-size:18px;color:#222">23</div>
<div style="left:37px;top:292px;width:1857px;height:683px;background:#fff"></div>
<div style="left:37px;top:322px;width:1857px;height:1px;background:#d9d9d9"></div>
<div style="left:37px;top:352px;width:1857px;height:1px;background:#d9d9d9"></div>
<div style="left:37px;top:382px;width:1857px;height:1px;background:#d9d9d9"></div>
<div style="left:37px;top:412px;width:1857px;height:1px;background:#d9d9d9"></div>
<div style="left:37px;top:442px;width:1857px;height:1px;background:#d9d9d9"></div>
<div style="left:37px;top:472px;width:1857px;height:1px;background:#d9d9d9"></div>
<div style="left:37px;top:502px;width:1857px;height:1px;background:#d9d9d9"></div>
<div style="left:37px;top:532px;width:1857px;height:1px;background:#d9d9d9"></div>
<div style="left:37px;top:562px;width:1857px;height:1px;background:#d9d9d9"></div>
<div style="left:37px;top:592px;width:1857px;height:1px;background:#d9d9d9"></div>
<div style="left:37px;top:622px;width:1857px;height:1px;background:#d9d9d9"></div>
<div style="left:37px;top:652px;width:1857px;height:1px;background:#d9d9d9"></div>
<div style="left:37px;top:682px;width:1857px;height:1px;background:#d9d9d9"></div>
<div style="left:37px;top:712px;width:1857px;height:1px;background:#d9d9d9"></div>
<div style="left:37px;top:742px;width:1857px;height:1px;background:#d9d9d9"></div>
<div style="left:37px;top:772px;width:1857px;height:1px;background:#d9d9d9"></div>
<div style="left:37px;top:802px;width:1857px;height:1px;background:#d9d9d9"></div>
<div style="left:37px;top:832px;width:1857px;height:1px;background:#d9d9d9"></div>
<div style="left:37px;top:862px;width:1857px;height:1px;background:#d9d9d9"></div>
<div style="left:37px;top:892px;width:1857px;height:1px;background:#d9d9d9"></div>
<div style="left:37px;top:922px;width:1857px;height:1px;background:#d9d9d9"></div>
<div style="left:37px;top:952px;width:1857px;height:1px;background:#d9d9d9"></div>
<div style="left:141px;top:292px;width:1px;height:683px;background:#d9d9d9"></div>
<div style="left:229px;top:292px;width:1px;height:683px;background:#d9d9d9"></div>
<div style="left:317px;top:292px;width:1px;height:683px;background:#d9d9d9"></div>
<div style="left:405px;top:292px;width:1px;height:683px;background:#d9d9d9"></div>
<div style="left:499px;top:292px;width:1px;height:683px;background:#d9d9d9"></div>
<div style="left:585px;top:292px;width:1px;height:683px;background:#d9d9d9"></div>
<div style="left:671px;top:292px;width:1px;height:683px;background:#d9d9d9"></div>
<div style="left:797px;top:292px;width:1px;height:683px;background:#d9d9d9"></div>
<div style="left:874px;top:292px;width:1px;height:683px;background:#d9d9d9"></div>
<div style="left:936px;top:292px;width:1px;height:683px;background:#d9d9d9"></div>
<div style="left:1053px;top:292px;width:1px;height:683px;background:#d9d9d9"></div>
<div style="left:1133px;top:292px;width:1px;height:683px;background:#d9d9d9"></div>
<div style="left:1209px;top:292px;width:1px;height:683px;background:#d9d9d9"></div>
<div style="left:1284px;top:292px;width:1px;height:683px;background:#d9d9d9"></div>
<div style="left:1358px;top:292px;width:1px;height:683px;background:#d9d9d9"></div>
<div style="left:1432px;top:292px;width:1px;height:683px;background:#d9d9d9"></div>
<div style="left:1505px;top:292px;width:1px;height:683px;background:#d9d9d9"></div>
<div style="left:1578px;top:292px;width:1px;height:683px;background:#d9d9d9"></div>
<div style="left:1644px;top:292px;width:1px;height:683px;background:#d9d9d9"></div>
<div style="left:1738px;top:292px;width:1px;height:683px;background:#d9d9d9"></div>
<div style="left:1826px;top:292px;width:1px;height:683px;background:#d9d9d9"></div>
<div style="left:797px;top:292px;width:78px;height:31px;background:#ffc7ce"></div>
<div style="left:1209px;top:292px;width:76px;height:31px;background:#c6efce"></div>
<div style="left:1358px;top:292px;width:75px;height:31px;background:#c6efce"></div>
<div style="left:1505px;top:292px;width:74px;height:31px;background:#c6efce"></div>
<div style="left:1644px;top:292px;width:95px;height:31px;background:#c6efce"></div>
<div style="left:499px;top:322px;width:87px;height:31px;background:#fbd5d7"></div>
<div style="left:585px;top:322px;width:87px;height:31px;background:#fbe7ea"></div>
<div style="left:797px;top:322px;width:78px;height:31px;background:#ffc7ce"></div>
<div style="left:874px;top:322px;width:63px;height:31px;background:#ffc000"></div>
<div style="left:1053px;top:322px;width:81px;height:31px;background:#ffeb9c"></div>
<div style="left:1209px;top:322px;width:76px;height:31px;background:#ffc7ce"></div>
<div style="left:1358px;top:322px;width:75px;height:31px;background:#ffc7ce"></div>
<div style="left:1505px;top:322px;width:74px;height:31px;background:#ffc7ce"></div>
<div style="left:1644px;top:322px;width:95px;height:31px;background:#c6efce"></div>
<div style="left:499px;top:352px;width:87px;height:31px;background:#e5f3eb"></div>
<div style="left:585px;top:352px;width:87px;height:31px;background:#eaf5ef"></div>
<div style="left:797px;top:352px;width:78px;height:31px;background:#ffc7ce"></div>
<div style="left:874px;top:352px;width:63px;height:31px;background:#ffc000"></div>
<div style="left:1053px;top:352px;width:81px;height:31px;background:#ffeb9c"></div>
<div style="left:1209px;top:352px;width:76px;height:31px;background:#ffc7ce"></div>
<div style="left:1358px;top:352px;width:75px;height:31px;background:#ffc7ce"></div>
<div style="left:1505px;top:352px;width:74px;height:31px;background:#ffc7ce"></div>
<div style="left:1644px;top:352px;width:95px;height:31px;background:#c6efce"></div>
<div style="left:499px;top:382px;width:87px;height:31px;background:#fbe0e3"></div>
<div style="left:585px;top:382px;width:87px;height:31px;background:#fcecef"></div>
<div style="left:797px;top:382px;width:78px;height:31px;background:#ffc7ce"></div>
<div style="left:874px;top:382px;width:63px;height:31px;background:#ffc000"></div>
<div style="left:1053px;top:382px;width:81px;height:31px;background:#ffeb9c"></div>
<div style="left:1209px;top:382px;width:76px;height:31px;background:#ffc7ce"></div>
<div style="left:1358px;top:382px;width:75px;height:31px;background:#ffc7ce"></div>
<div style="left:1505px;top:382px;width:74px;height:31px;background:#ffc7ce"></div>
<div style="left:1644px;top:382px;width:95px;height:31px;background:#c6efce"></div>
<div style="left:499px;top:412px;width:87px;height:31px;background:#fbe1e4"></div>
<div style="left:585px;top:412px;width:87px;height:31px;background:#fcecef"></div>
<div style="left:797px;top:412px;width:78px;height:31px;background:#ffc7ce"></div>
<div style="left:874px;top:412px;width:63px;height:31px;background:#ffc000"></div>
<div style="left:1053px;top:412px;width:81px;height:31px;background:#ffeb9c"></div>
<div style="left:1209px;top:412px;width:76px;height:31px;background:#ffc7ce"></div>
<div style="left:1358px;top:412px;width:75px;height:31px;background:#ffc7ce"></div>
<div style="left:1505px;top:412px;width:74px;height:31px;background:#ffc7ce"></div>
<div style="left:1644px;top:412px;width:95px;height:31px;background:#ffc7ce"></div>
<div style="left:499px;top:442px;width:87px;height:31px;background:#fac4c6"></div>
<div style="left:585px;top:442px;width:87px;height:31px;background:#fbdcdf"></div>
<div style="left:797px;top:442px;width:78px;height:31px;background:#ffc7ce"></div>
<div style="left:874px;top:442px;width:63px;height:31px;background:#ffc000"></div>
<div style="left:1053px;top:442px;width:81px;height:31px;background:#ffeb9c"></div>
<div style="left:1209px;top:442px;width:76px;height:31px;background:#ffc7ce"></div>
<div style="left:1358px;top:442px;width:75px;height:31px;background:#ffc7ce"></div>
<div style="left:1505px;top:442px;width:74px;height:31px;background:#ffc7ce"></div>
<div style="left:1644px;top:442px;width:95px;height:31px;background:#ffc7ce"></div>
<div style="left:499px;top:472px;width:87px;height:31px;background:#fabec1"></div>
<div style="left:585px;top:472px;width:87px;height:31px;background:#fbd9db"></div>
<div style="left:797px;top:472px;width:78px;height:31px;background:#ffc7ce"></div>
<div style="left:874px;top:472px;width:63px;height:31px;background:#ffc000"></div>
<div style="left:1053px;top:472px;width:81px;height:31px;background:#ffeb9c"></div>
<div style="left:1209px;top:472px;width:76px;height:31px;background:#ffc7ce"></div>
<div style="left:1358px;top:472px;width:75px;height:31px;background:#ffc7ce"></div>
<div style="left:1505px;top:472px;width:74px;height:31px;background:#ffc7ce"></div>
<div style="left:1644px;top:472px;width:95px;height:31px;background:#ffc7ce"></div>
<div style="left:499px;top:502px;width:87px;height:31px;background:#fcf2f5"></div>
<div style="left:585px;top:502px;width:87px;height:31px;background:#fcf7fa"></div>
<div style="left:797px;top:502px;width:78px;height:31px;background:#ffc7ce"></div>
<div style="left:874px;top:502px;width:63px;height:31px;background:#ffc000"></div>
<div style="left:1209px;top:502px;width:76px;height:31px;background:#ffc7ce"></div>
<div style="left:1358px;top:502px;width:75px;height:31px;background:#ffc7ce"></div>
<div style="left:1505px;top:502px;width:74px;height:31px;background:#ffc7ce"></div>
<div style="left:1644px;top:502px;width:95px;height:31px;background:#c6efce"></div>
<div style="left:499px;top:532px;width:87px;height:31px;background:#fbd6d9"></div>
<div style="left:585px;top:532px;width:87px;height:31px;background:#fbe5e8"></div>
<div style="left:797px;top:532px;width:78px;height:31px;background:#ffc7ce"></div>
<div style="left:874px;top:532px;width:63px;height:31px;background:#ffc000"></div>
<div style="left:1209px;top:532px;width:76px;height:31px;background:#ffc7ce"></div>
<div style="left:1358px;top:532px;width:75px;height:31px;background:#ffc7ce"></div>
<div style="left:1505px;top:532px;width:74px;height:31px;background:#ffc7ce"></div>
<div style="left:1644px;top:532px;width:95px;height:31px;background:#c6efce"></div>
<div style="left:499px;top:562px;width:87px;height:31px;background:#fbdcdf"></div>
<div style="left:585px;top:562px;width:87px;height:31px;background:#fbe9eb"></div>
<div style="left:797px;top:562px;width:78px;height:31px;background:#ffc7ce"></div>
<div style="left:874px;top:562px;width:63px;height:31px;background:#ffc000"></div>
<div style="left:1209px;top:562px;width:76px;height:31px;background:#ffc7ce"></div>
<div style="left:1358px;top:562px;width:75px;height:31px;background:#ffc7ce"></div>
<div style="left:1505px;top:562px;width:74px;height:31px;background:#c6efce"></div>
<div style="left:1644px;top:562px;width:95px;height:31px;background:#ffc7ce"></div>
<div style="left:499px;top:592px;width:87px;height:31px;background:#fcecef"></div>
<div style="left:585px;top:592px;width:87px;height:31px;background:#fcf3f6"></div>
<div style="left:797px;top:592px;width:78px;height:31px;background:#c6efce"></div>
<div style="left:1209px;top:592px;width:76px;height:31px;background:#ffc7ce"></div>
<div style="left:1358px;top:592px;width:75px;height:31px;background:#ffc7ce"></div>
<div style="left:1505px;top:592px;width:74px;height:31px;background:#c6efce"></div>
<div style="left:1644px;top:592px;width:95px;height:31px;background:#c6efce"></div>
<div style="left:499px;top:622px;width:87px;height:31px;background:#eff7f3"></div>
<div style="left:585px;top:622px;width:87px;height:31px;background:#f0f7f4"></div>
<div style="left:797px;top:622px;width:78px;height:31px;background:#ffc7ce"></div>
<div style="left:1209px;top:622px;width:76px;height:31px;background:#c6efce"></div>
<div style="left:1358px;top:622px;width:75px;height:31px;background:#c6efce"></div>
<div style="left:1505px;top:622px;width:74px;height:31px;background:#c6efce"></div>
<div style="left:1644px;top:622px;width:95px;height:31px;background:#c6efce"></div>
<div style="left:499px;top:652px;width:87px;height:31px;background:#fcfafd"></div>
<div style="left:585px;top:652px;width:87px;height:31px;background:#fcfafd"></div>
<div style="left:797px;top:652px;width:78px;height:31px;background:#c6efce"></div>
<div style="left:1209px;top:652px;width:76px;height:31px;background:#ffc7ce"></div>
<div style="left:1358px;top:652px;width:75px;height:31px;background:#ffc7ce"></div>
<div style="left:1505px;top:652px;width:74px;height:31px;background:#c6efce"></div>
<div style="left:1578px;top:652px;width:67px;height:31px;background:#70ad47"></div>
<div style="left:1644px;top:652px;width:95px;height:31px;background:#c6efce"></div>
<div style="left:499px;top:682px;width:87px;height:31px;background:#fbfcfe"></div>
<div style="left:585px;top:682px;width:87px;height:31px;background:#fcfcff"></div>
<div style="left:797px;top:682px;width:78px;height:31px;background:#c6efce"></div>
<div style="left:1209px;top:682px;width:76px;height:31px;background:#ffc7ce"></div>
<div style="left:1358px;top:682px;width:75px;height:31px;background:#ffc7ce"></div>
<div style="left:1505px;top:682px;width:74px;height:31px;background:#c6efce"></div>
<div style="left:1578px;top:682px;width:67px;height:31px;background:#70ad47"></div>
<div style="left:1644px;top:682px;width:95px;height:31px;background:#c6efce"></div>
<div style="left:499px;top:712px;width:87px;height:31px;background:#fbe3e6"></div>
<div style="left:585px;top:712px;width:87px;height:31px;background:#fcecef"></div>
<div style="left:797px;top:712px;width:78px;height:31px;background:#ffc7ce"></div>
<div style="left:1209px;top:712px;width:76px;height:31px;background:#ffc7ce"></div>
<div style="left:1358px;top:712px;width:75px;height:31px;background:#ffc7ce"></div>
<div style="left:1505px;top:712px;width:74px;height:31px;background:#c6efce"></div>
<div style="left:1578px;top:712px;width:67px;height:31px;background:#70ad47"></div>
<div style="left:1644px;top:712px;width:95px;height:31px;background:#c6efce"></div>
<div style="left:499px;top:742px;width:87px;height:31px;background:#fbc9cc"></div>
<div style="left:585px;top:742px;width:87px;height:31px;background:#fbdcdf"></div>
<div style="left:797px;top:742px;width:78px;height:31px;background:#ffc7ce"></div>
<div style="left:1209px;top:742px;width:76px;height:31px;background:#ffc7ce"></div>
<div style="left:1358px;top:742px;width:75px;height:31px;background:#c6efce"></div>
<div style="left:1505px;top:742px;width:74px;height:31px;background:#c6efce"></div>
<div style="left:1578px;top:742px;width:67px;height:31px;background:#70ad47"></div>
<div style="left:1644px;top:742px;width:95px;height:31px;background:#c6efce"></div>
<div style="left:499px;top:772px;width:87px;height:31px;background:#d8eee0"></div>
<div style="left:585px;top:772px;width:87px;height:31px;background:#ddf0e5"></div>
<div style="left:797px;top:772px;width:78px;height:31px;background:#c6efce"></div>
<div style="left:1209px;top:772px;width:76px;height:31px;background:#c6efce"></div>
<div style="left:1358px;top:772px;width:75px;height:31px;background:#c6efce"></div>
<div style="left:1505px;top:772px;width:74px;height:31px;background:#c6efce"></div>
<div style="left:1578px;top:772px;width:67px;height:31px;background:#70ad47"></div>
<div style="left:1644px;top:772px;width:95px;height:31px;background:#c6efce"></div>
<div style="left:499px;top:802px;width:87px;height:31px;background:#d4ecdc"></div>
<div style="left:585px;top:802px;width:87px;height:31px;background:#daeee2"></div>
<div style="left:797px;top:802px;width:78px;height:31px;background:#c6efce"></div>
<div style="left:1209px;top:802px;width:76px;height:31px;background:#c6efce"></div>
<div style="left:1358px;top:802px;width:75px;height:31px;background:#c6efce"></div>
<div style="left:1505px;top:802px;width:74px;height:31px;background:#c6efce"></div>
<div style="left:1578px;top:802px;width:67px;height:31px;background:#70ad47"></div>
<div style="left:1644px;top:802px;width:95px;height:31px;background:#c6efce"></div>
<div style="left:499px;top:832px;width:87px;height:31px;background:#fcebee"></div>
<div style="left:585px;top:832px;width:87px;height:31px;background:#fcf1f4"></div>
<div style="left:797px;top:832px;width:78px;height:31px;background:#ffc7ce"></div>
<div style="left:1209px;top:832px;width:76px;height:31px;background:#c6efce"></div>
<div style="left:1358px;top:832px;width:75px;height:31px;background:#c6efce"></div>
<div style="left:1505px;top:832px;width:74px;height:31px;background:#c6efce"></div>
<div style="left:1578px;top:832px;width:67px;height:31px;background:#70ad47"></div>
<div style="left:1644px;top:832px;width:95px;height:31px;background:#c6efce"></div>
<div style="left:499px;top:862px;width:87px;height:31px;background:#eff7f4"></div>
<div style="left:585px;top:862px;width:87px;height:31px;background:#f0f7f4"></div>
<div style="left:797px;top:862px;width:78px;height:31px;background:#c6efce"></div>
<div style="left:874px;top:862px;width:63px;height:31px;background:#5b9bd5"></div>
<div style="left:1209px;top:862px;width:76px;height:31px;background:#c6efce"></div>
<div style="left:1358px;top:862px;width:75px;height:31px;background:#c6efce"></div>
<div style="left:1505px;top:862px;width:74px;height:31px;background:#c6efce"></div>
<div style="left:1578px;top:862px;width:67px;height:31px;background:#70ad47"></div>
<div style="left:1644px;top:862px;width:95px;height:31px;background:#c6efce"></div>
<div style="left:499px;top:892px;width:87px;height:31px;background:#bfe3ca"></div>
<div style="left:585px;top:892px;width:87px;height:31px;background:#cbe8d5"></div>
<div style="left:797px;top:892px;width:78px;height:31px;background:#c6efce"></div>
<div style="left:874px;top:892px;width:63px;height:31px;background:#5b9bd5"></div>
<div style="left:1209px;top:892px;width:76px;height:31px;background:#c6efce"></div>
<div style="left:1358px;top:892px;width:75px;height:31px;background:#c6efce"></div>
<div style="left:1505px;top:892px;width:74px;height:31px;background:#c6efce"></div>
<div style="left:1644px;top:892px;width:95px;height:31px;background:#c6efce"></div>
<div style="left:499px;top:922px;width:87px;height:31px;background:#f7fafb"></div>
<div style="left:585px;top:922px;width:87px;height:31px;background:#f9fbfc"></div>
<div style="left:797px;top:922px;width:78px;height:31px;background:#c6efce"></div>
<div style="left:874px;top:922px;width:63px;height:31px;background:#5b9bd5"></div>
<div style="left:1209px;top:922px;width:76px;height:31px;background:#ffc7ce"></div>
<div style="left:1358px;top:922px;width:75px;height:31px;background:#ffc7ce"></div>
<div style="left:1505px;top:922px;width:74px;height:31px;background:#c6efce"></div>
<div style="left:1644px;top:922px;width:95px;height:31px;background:#c6efce"></div>
<div style="left:499px;top:952px;width:87px;height:23px;background:#f5f9f9"></div>
<div style="left:585px;top:952px;width:87px;height:23px;background:#f6fafa"></div>
<div style="left:797px;top:952px;width:78px;height:23px;background:#c6efce"></div>
<div style="left:874px;top:952px;width:63px;height:23px;background:#5b9bd5"></div>
<div style="left:1209px;top:952px;width:76px;height:23px;background:#ffc7ce"></div>
<div style="left:1358px;top:952px;width:75px;height:23px;background:#ffc7ce"></div>
<div style="left:1505px;top:952px;width:74px;height:23px;background:#c6efce"></div>
<div style="left:1578px;top:952px;width:67px;height:23px;background:#70ad47"></div>
<div style="left:1644px;top:952px;width:95px;height:23px;background:#c6efce"></div>
<div class="c" style="left:36px;top:293px;width:106px;text-align:center;color:#222;">本日</div>
<div class="c" style="left:141px;top:293px;width:89px;text-align:center;color:#222;">始値</div>
<div class="c" style="left:229px;top:293px;width:89px;text-align:center;color:#222;">高値</div>
<div class="c" style="left:317px;top:293px;width:89px;text-align:center;color:#222;">安値</div>
<div class="c" style="left:405px;top:293px;width:95px;text-align:center;color:#222;">終値</div>
<div class="c" style="left:499px;top:293px;width:87px;text-align:center;color:#222;">前日比</div>
<div class="c" style="left:585px;top:293px;width:87px;text-align:center;color:#222;">前日比%</div>
<div class="c" style="left:671px;top:293px;width:127px;text-align:center;color:#222;">売買高(株)</div>
<div class="c" style="left:797px;top:293px;width:77px;text-align:center;overflow:visible;color:#9c0006;"><span style="position:absolute;left:50%;transform:translateX(-50%)">陽線陰線</span></div>
<div class="c" style="left:874px;top:293px;width:63px;text-align:center;color:#222;">連続数</div>
<div class="c" style="left:936px;top:293px;width:117px;text-align:center;overflow:visible;color:#222;"><span style="position:absolute;left:50%;transform:translateX(-50%)">終値前日比較</span></div>
<div class="c" style="left:1053px;top:293px;width:80px;text-align:center;overflow:visible;color:#222;"><span style="position:absolute;left:50%;transform:translateX(-50%)">上幅下幅</span></div>
<div class="c" style="left:1136px;top:293px;width:76px;text-align:left;overflow:visible;color:#222;">5日比較</div>
<div class="c" style="left:1287px;top:293px;width:74px;text-align:left;overflow:visible;color:#222;">25日比較</div>
<div class="c" style="left:1435px;top:293px;width:73px;text-align:left;overflow:visible;color:#222;">60日比</div>
<div class="c" style="left:1578px;top:293px;width:66px;padding-left:3px;">トレンド</div>
<div class="c" style="left:1644px;top:293px;width:94px;text-align:center;overflow:visible;color:#006100;"><span style="position:absolute;left:50%;transform:translateX(-50%)">空売り比率</span></div>
<div class="c" style="left:36px;top:323px;width:106px;text-align:center;color:#222;letter-spacing:1.3px;text-indent:1px">2021/9/10</div>
<div class="c" style="left:141px;top:323px;width:89px;text-align:center;color:#222;letter-spacing:0.1px">30,089.45</div>
<div class="c" style="left:229px;top:323px;width:89px;text-align:center;color:#222;letter-spacing:0.1px">30,381.84</div>
<div class="c" style="left:317px;top:323px;width:89px;text-align:center;color:#222;letter-spacing:0.1px">30,064.02</div>
<div class="c" style="left:405px;top:323px;width:95px;text-align:center;color:#222;letter-spacing:0.1px">30,381.84</div>
<div class="c" style="left:499px;top:323px;width:87px;text-align:center;color:#222;">373.65</div>
<div class="c" style="left:585px;top:323px;width:87px;text-align:center;color:#222;">1.2</div>
<div class="c" style="left:671px;top:323px;width:127px;text-align:center;color:#222;">1,291,034,100</div>
<div class="c" style="left:797px;top:323px;width:78px;text-align:center;color:#9c0006;">陽</div>
<div class="c" style="left:874px;top:323px;width:63px;text-align:center;color:#222;">9</div>
<div class="c" style="left:936px;top:323px;width:114px;text-align:right;color:#222;">2592.55</div>
<div class="c" style="left:1053px;top:323px;width:81px;text-align:center;color:#9c5700;">千</div>
<div class="c" style="left:1133px;top:323px;width:73px;text-align:right;color:#222;">30029</div>
<div class="c" style="left:1209px;top:323px;width:72px;text-align:right;color:#9c0006;">1.0117</div>
<div class="c" style="left:1358px;top:323px;width:71px;text-align:right;color:#9c0006;">1.0742</div>
<div class="c" style="left:1505px;top:323px;width:70px;text-align:right;color:#9c0006;">1.0737</div>
<div class="c" style="left:1284px;top:323px;width:71px;text-align:right;color:#222;">28283</div>
<div class="c" style="left:1432px;top:323px;width:70px;text-align:right;color:#222;">28297</div>
<div class="c" style="left:1644px;top:323px;width:91px;text-align:right;color:#006100;">44.6</div>
<svg style="position:absolute;left:1285px;top:323px;" width="7" height="7" viewBox="0 0 7 7"><path d="M0 0H7L0 7Z" fill="#008000"/></svg>
<svg style="position:absolute;left:1433px;top:323px;" width="7" height="7" viewBox="0 0 7 7"><path d="M0 0H7L0 7Z" fill="#008000"/></svg>
<div class="c" style="left:36px;top:353px;width:106px;text-align:center;color:#222;letter-spacing:1.3px;text-indent:1px">2021/9/9</div>
<div class="c" style="left:141px;top:353px;width:89px;text-align:center;color:#222;letter-spacing:0.1px">29,959.21</div>
<div class="c" style="left:229px;top:353px;width:89px;text-align:center;color:#222;letter-spacing:0.1px">30,097.56</div>
<div class="c" style="left:317px;top:353px;width:89px;text-align:center;color:#222;letter-spacing:0.1px">29,909.92</div>
<div class="c" style="left:405px;top:353px;width:95px;text-align:center;color:#222;letter-spacing:0.1px">30,008.19</div>
<div class="c" style="left:499px;top:353px;width:87px;text-align:center;color:#222;">-173.02</div>
<div class="c" style="left:585px;top:353px;width:87px;text-align:center;color:#222;">-0.6</div>
<div class="c" style="left:671px;top:353px;width:127px;text-align:center;color:#222;">1,060,087,000</div>
<div class="c" style="left:797px;top:353px;width:78px;text-align:center;color:#9c0006;">陽</div>
<div class="c" style="left:874px;top:353px;width:63px;text-align:center;color:#222;">8</div>
<div class="c" style="left:936px;top:353px;width:114px;text-align:right;color:#222;">2218.9</div>
<div class="c" style="left:1053px;top:353px;width:81px;text-align:center;color:#9c5700;">千</div>
<div class="c" style="left:1133px;top:353px;width:73px;text-align:right;color:#222;">29779</div>
<div class="c" style="left:1209px;top:353px;width:72px;text-align:right;color:#9c0006;">1.0077</div>
<div class="c" style="left:1358px;top:353px;width:71px;text-align:right;color:#9c0006;">1.065</div>
<div class="c" style="left:1505px;top:353px;width:70px;text-align:right;color:#9c0006;">1.0611</div>
<div class="c" style="left:1284px;top:353px;width:71px;text-align:right;color:#222;">28177</div>
<div class="c" style="left:1432px;top:353px;width:70px;text-align:right;color:#222;">28281</div>
<div class="c" style="left:1644px;top:353px;width:91px;text-align:right;color:#006100;">41.7</div>
<svg style="position:absolute;left:1285px;top:353px;" width="7" height="7" viewBox="0 0 7 7"><path d="M0 0H7L0 7Z" fill="#008000"/></svg>
<svg style="position:absolute;left:1433px;top:353px;" width="7" height="7" viewBox="0 0 7 7"><path d="M0 0H7L0 7Z" fill="#008000"/></svg>
<div class="c" style="left:36px;top:383px;width:106px;text-align:center;color:#222;letter-spacing:1.3px;text-indent:1px">2021/9/8</div>
<div class="c" style="left:141px;top:383px;width:89px;text-align:center;color:#222;letter-spacing:0.1px">29,819.55</div>
<div class="c" style="left:229px;top:383px;width:89px;text-align:center;color:#222;letter-spacing:0.1px">30,241.87</div>
<div class="c" style="left:317px;top:383px;width:89px;text-align:center;color:#222;letter-spacing:0.1px">29,787.13</div>
<div class="c" style="left:405px;top:383px;width:95px;text-align:center;color:#222;letter-spacing:0.1px">30,181.21</div>
<div class="c" style="left:499px;top:383px;width:87px;text-align:center;color:#222;">265.07</div>
<div class="c" style="left:585px;top:383px;width:87px;text-align:center;color:#222;">0.9</div>
<div class="c" style="left:671px;top:383px;width:127px;text-align:center;color:#222;">1,087,239,700</div>
<div class="c" style="left:797px;top:383px;width:78px;text-align:center;color:#9c0006;">陽</div>
<div class="c" style="left:874px;top:383px;width:63px;text-align:center;color:#222;">7</div>
<div class="c" style="left:936px;top:383px;width:114px;text-align:right;color:#222;">2391.92</div>
<div class="c" style="left:1053px;top:383px;width:81px;text-align:center;color:#9c5700;">千</div>
<div class="c" style="left:1133px;top:383px;width:73px;text-align:right;color:#222;">29486</div>
<div class="c" style="left:1209px;top:383px;width:72px;text-align:right;color:#9c0006;">1.0236</div>
<div class="c" style="left:1358px;top:383px;width:71px;text-align:right;color:#9c0006;">1.0748</div>
<div class="c" style="left:1505px;top:383px;width:70px;text-align:right;color:#9c0006;">1.0677</div>
<div class="c" style="left:1284px;top:383px;width:71px;text-align:right;color:#222;">28080</div>
<div class="c" style="left:1432px;top:383px;width:70px;text-align:right;color:#222;">28267</div>
<div class="c" style="left:1644px;top:383px;width:91px;text-align:right;color:#006100;">40.1</div>
<svg style="position:absolute;left:1285px;top:383px;" width="7" height="7" viewBox="0 0 7 7"><path d="M0 0H7L0 7Z" fill="#008000"/></svg>
<svg style="position:absolute;left:1433px;top:383px;" width="7" height="7" viewBox="0 0 7 7"><path d="M0 0H7L0 7Z" fill="#008000"/></svg>
<div class="c" style="left:36px;top:413px;width:106px;text-align:center;color:#222;letter-spacing:1.3px;text-indent:1px">2021/9/7</div>
<div class="c" style="left:141px;top:413px;width:89px;text-align:center;color:#222;letter-spacing:0.1px">29,883.92</div>
<div class="c" style="left:229px;top:413px;width:89px;text-align:center;color:#222;letter-spacing:0.1px">30,048.23</div>
<div class="c" style="left:317px;top:413px;width:89px;text-align:center;color:#222;letter-spacing:0.1px">29,838.43</div>
<div class="c" style="left:405px;top:413px;width:95px;text-align:center;color:#222;letter-spacing:0.1px">29,916.14</div>
<div class="c" style="left:499px;top:413px;width:87px;text-align:center;color:#222;">256.25</div>
<div class="c" style="left:585px;top:413px;width:87px;text-align:center;color:#222;">0.9</div>
<div class="c" style="left:671px;top:413px;width:127px;text-align:center;color:#222;">1,083,202,500</div>
<div class="c" style="left:797px;top:413px;width:78px;text-align:center;color:#9c0006;">陽</div>
<div class="c" style="left:874px;top:413px;width:63px;text-align:center;color:#222;">6</div>
<div class="c" style="left:936px;top:413px;width:114px;text-align:right;color:#222;">2126.85</div>
<div class="c" style="left:1053px;top:413px;width:81px;text-align:center;color:#9c5700;">千</div>
<div class="c" style="left:1133px;top:413px;width:73px;text-align:right;color:#222;">29140</div>
<div class="c" style="left:1209px;top:413px;width:72px;text-align:right;color:#9c0006;">1.0266</div>
<div class="c" style="left:1358px;top:413px;width:71px;text-align:right;color:#9c0006;">1.0693</div>
<div class="c" style="left:1505px;top:413px;width:70px;text-align:right;color:#9c0006;">1.0591</div>
<div class="c" style="left:1284px;top:413px;width:71px;text-align:right;color:#222;">27978</div>
<div class="c" style="left:1432px;top:413px;width:70px;text-align:right;color:#222;">28247</div>
<div class="c" style="left:1644px;top:413px;width:91px;text-align:right;color:#9c0006;">39.4</div>
<svg style="position:absolute;left:1285px;top:413px;" width="7" height="7" viewBox="0 0 7 7"><path d="M0 0H7L0 7Z" fill="#008000"/></svg>
<svg style="position:absolute;left:1433px;top:413px;" width="7" height="7" viewBox="0 0 7 7"><path d="M0 0H7L0 7Z" fill="#008000"/></svg>
<div class="c" style="left:36px;top:443px;width:106px;text-align:center;color:#222;letter-spacing:1.3px;text-indent:1px">2021/9/6</div>
<div class="c" style="left:141px;top:443px;width:89px;text-align:center;color:#222;letter-spacing:0.1px">29,501.22</div>
<div class="c" style="left:229px;top:443px;width:89px;text-align:center;color:#222;letter-spacing:0.1px">29,705.04</div>
<div class="c" style="left:317px;top:443px;width:89px;text-align:center;color:#222;letter-spacing:0.1px">29,469.35</div>
<div class="c" style="left:405px;top:443px;width:95px;text-align:center;color:#222;letter-spacing:0.1px">29,659.89</div>
<div class="c" style="left:499px;top:443px;width:87px;text-align:center;color:#222;">531.78</div>
<div class="c" style="left:585px;top:443px;width:87px;text-align:center;color:#222;">1.8</div>
<div class="c" style="left:671px;top:443px;width:127px;text-align:center;color:#222;">1,176,832,400</div>
<div class="c" style="left:797px;top:443px;width:78px;text-align:center;color:#9c0006;">陽</div>
<div class="c" style="left:874px;top:443px;width:63px;text-align:center;color:#222;">5</div>
<div class="c" style="left:936px;top:443px;width:114px;text-align:right;color:#222;">1870.6</div>
<div class="c" style="left:1053px;top:443px;width:81px;text-align:center;color:#9c5700;">千</div>
<div class="c" style="left:1133px;top:443px;width:73px;text-align:right;color:#222;">28774</div>
<div class="c" style="left:1209px;top:443px;width:72px;text-align:right;color:#9c0006;">1.0308</div>
<div class="c" style="left:1358px;top:443px;width:71px;text-align:right;color:#9c0006;">1.0633</div>
<div class="c" style="left:1505px;top:443px;width:70px;text-align:right;color:#9c0006;">1.0506</div>
<div class="c" style="left:1284px;top:443px;width:71px;text-align:right;color:#222;">27893</div>
<div class="c" style="left:1432px;top:443px;width:70px;text-align:right;color:#222;">28231</div>
<div class="c" style="left:1644px;top:443px;width:91px;text-align:right;color:#9c0006;">38.7</div>
<svg style="position:absolute;left:1285px;top:443px;" width="7" height="7" viewBox="0 0 7 7"><path d="M0 0H7L0 7Z" fill="#008000"/></svg>
<svg style="position:absolute;left:1433px;top:443px;" width="7" height="7" viewBox="0 0 7 7"><path d="M0 0H7L0 7Z" fill="#008000"/></svg>
<div class="c" style="left:36px;top:473px;width:106px;text-align:center;color:#222;letter-spacing:1.3px;text-indent:1px">2021/9/3</div>
<div class="c" style="left:141px;top:473px;width:89px;text-align:center;color:#222;letter-spacing:0.1px">28,626.48</div>
<div class="c" style="left:229px;top:473px;width:89px;text-align:center;color:#222;letter-spacing:0.1px">29,149.65</div>
<div class="c" style="left:317px;top:473px;width:89px;text-align:center;color:#222;letter-spacing:0.1px">28,607.87</div>
<div class="c" style="left:405px;top:473px;width:95px;text-align:center;color:#222;letter-spacing:0.1px">29,128.11</div>
<div class="c" style="left:499px;top:473px;width:87px;text-align:center;color:#222;">584.6</div>
<div class="c" style="left:585px;top:473px;width:87px;text-align:center;color:#222;">2</div>
<div class="c" style="left:671px;top:473px;width:127px;text-align:center;color:#222;">1,243,105,900</div>
<div class="c" style="left:797px;top:473px;width:78px;text-align:center;color:#9c0006;">陽</div>
<div class="c" style="left:874px;top:473px;width:63px;text-align:center;color:#222;">4</div>
<div class="c" style="left:936px;top:473px;width:114px;text-align:right;color:#222;">1338.82</div>
<div class="c" style="left:1053px;top:473px;width:81px;text-align:center;color:#9c5700;">千</div>
<div class="c" style="left:1133px;top:473px;width:73px;text-align:right;color:#222;">28400</div>
<div class="c" style="left:1209px;top:473px;width:72px;text-align:right;color:#9c0006;">1.0256</div>
<div class="c" style="left:1358px;top:473px;width:71px;text-align:right;color:#9c0006;">1.0479</div>
<div class="c" style="left:1505px;top:473px;width:70px;text-align:right;color:#9c0006;">1.0323</div>
<div class="c" style="left:1284px;top:473px;width:71px;text-align:right;color:#222;">27798</div>
<div class="c" style="left:1432px;top:473px;width:70px;text-align:right;color:#222;">28217</div>
<div class="c" style="left:1644px;top:473px;width:91px;text-align:right;color:#9c0006;">39.4</div>
<svg style="position:absolute;left:1285px;top:473px;" width="7" height="7" viewBox="0 0 7 7"><path d="M0 0H7L0 7Z" fill="#008000"/></svg>
<svg style="position:absolute;left:1433px;top:473px;" width="7" height="7" viewBox="0 0 7 7"><path d="M0 0H7L0 7Z" fill="#008000"/></svg>
<div class="c" style="left:36px;top:503px;width:106px;text-align:center;color:#222;letter-spacing:1.3px;text-indent:1px">2021/9/2</div>
<div class="c" style="left:141px;top:503px;width:89px;text-align:center;color:#222;letter-spacing:0.1px">28,522.46</div>
<div class="c" style="left:229px;top:503px;width:89px;text-align:center;color:#222;letter-spacing:0.1px">28,626.20</div>
<div class="c" style="left:317px;top:503px;width:89px;text-align:center;color:#222;letter-spacing:0.1px">28,412.91</div>
<div class="c" style="left:405px;top:503px;width:95px;text-align:center;color:#222;letter-spacing:0.1px">28,543.51</div>
<div class="c" style="left:499px;top:503px;width:87px;text-align:center;color:#222;">92.49</div>
<div class="c" style="left:585px;top:503px;width:87px;text-align:center;color:#222;">0.3</div>
<div class="c" style="left:671px;top:503px;width:127px;text-align:center;color:#222;">914,186,100</div>
<div class="c" style="left:797px;top:503px;width:78px;text-align:center;color:#9c0006;">陽</div>
<div class="c" style="left:874px;top:503px;width:63px;text-align:center;color:#222;">3</div>
<div class="c" style="left:936px;top:503px;width:114px;text-align:right;color:#222;">754.22</div>
<div class="c" style="left:1133px;top:503px;width:73px;text-align:right;color:#222;">28103</div>
<div class="c" style="left:1209px;top:503px;width:72px;text-align:right;color:#9c0006;">1.0157</div>
<div class="c" style="left:1358px;top:503px;width:71px;text-align:right;color:#9c0006;">1.0288</div>
<div class="c" style="left:1505px;top:503px;width:70px;text-align:right;color:#9c0006;">1.0117</div>
<div class="c" style="left:1284px;top:503px;width:71px;text-align:right;color:#222;">27744</div>
<div class="c" style="left:1432px;top:503px;width:70px;text-align:right;color:#222;">28215</div>
<div class="c" style="left:1644px;top:503px;width:91px;text-align:right;color:#006100;">41.7</div>
<svg style="position:absolute;left:1285px;top:503px;" width="7" height="7" viewBox="0 0 7 7"><path d="M0 0H7L0 7Z" fill="#008000"/></svg>
<svg style="position:absolute;left:1433px;top:503px;" width="7" height="7" viewBox="0 0 7 7"><path d="M0 0H7L0 7Z" fill="#008000"/></svg>
<div class="c" style="left:36px;top:533px;width:106px;text-align:center;color:#222;letter-spacing:1.3px;text-indent:1px">2021/9/1</div>
<div class="c" style="left:141px;top:533px;width:89px;text-align:center;color:#222;letter-spacing:0.1px">28,179.04</div>
<div class="c" style="left:229px;top:533px;width:89px;text-align:center;color:#222;letter-spacing:0.1px">28,457.67</div>
<div class="c" style="left:317px;top:533px;width:89px;text-align:center;color:#222;letter-spacing:0.1px">28,179.04</div>
<div class="c" style="left:405px;top:533px;width:95px;text-align:center;color:#222;letter-spacing:0.1px">28,451.02</div>
<div class="c" style="left:499px;top:533px;width:87px;text-align:center;color:#222;">361.48</div>
<div class="c" style="left:585px;top:533px;width:87px;text-align:center;color:#222;">1.3</div>
<div class="c" style="left:671px;top:533px;width:127px;text-align:center;color:#222;">954,453,600</div>
<div class="c" style="left:797px;top:533px;width:78px;text-align:center;color:#9c0006;">陽</div>
<div class="c" style="left:874px;top:533px;width:63px;text-align:center;color:#222;">2</div>
<div class="c" style="left:936px;top:533px;width:114px;text-align:right;color:#222;">661.73</div>
<div class="c" style="left:1133px;top:533px;width:73px;text-align:right;color:#222;">27943</div>
<div class="c" style="left:1209px;top:533px;width:72px;text-align:right;color:#9c0006;">1.0182</div>
<div class="c" style="left:1358px;top:533px;width:71px;text-align:right;color:#9c0006;">1.0269</div>
<div class="c" style="left:1505px;top:533px;width:70px;text-align:right;color:#9c0006;">1.0081</div>
<div class="c" style="left:1284px;top:533px;width:71px;text-align:right;color:#222;">27706</div>
<div class="c" style="left:1432px;top:533px;width:70px;text-align:right;color:#222;">28223</div>
<div class="c" style="left:1644px;top:533px;width:91px;text-align:right;color:#006100;">40.9</div>
<svg style="position:absolute;left:1285px;top:533px;" width="7" height="7" viewBox="0 0 7 7"><path d="M0 0H7L0 7Z" fill="#008000"/></svg>
<svg style="position:absolute;left:1433px;top:533px;" width="7" height="7" viewBox="0 0 7 7"><path d="M0 0H7L0 7Z" fill="#008000"/></svg>
<div class="c" style="left:36px;top:563px;width:106px;text-align:center;color:#222;letter-spacing:1.3px;text-indent:1px">2021/8/31</div>
<div class="c" style="left:141px;top:563px;width:89px;text-align:center;color:#222;letter-spacing:0.1px">27,690.77</div>
<div class="c" style="left:229px;top:563px;width:89px;text-align:center;color:#222;letter-spacing:0.1px">28,158.95</div>
<div class="c" style="left:317px;top:563px;width:89px;text-align:center;color:#222;letter-spacing:0.1px">27,602.21</div>
<div class="c" style="left:405px;top:563px;width:95px;text-align:center;color:#222;letter-spacing:0.1px">28,089.54</div>
<div class="c" style="left:499px;top:563px;width:87px;text-align:center;color:#222;">300.25</div>
<div class="c" style="left:585px;top:563px;width:87px;text-align:center;color:#222;">1.1</div>
<div class="c" style="left:671px;top:563px;width:127px;text-align:center;color:#222;">944,024,400</div>
<div class="c" style="left:797px;top:563px;width:78px;text-align:center;color:#9c0006;">陽</div>
<div class="c" style="left:874px;top:563px;width:63px;text-align:center;color:#222;">1</div>
<div class="c" style="left:936px;top:563px;width:114px;text-align:right;color:#222;">300.25</div>
<div class="c" style="left:1133px;top:563px;width:73px;text-align:right;color:#222;">27797</div>
<div class="c" style="left:1209px;top:563px;width:72px;text-align:right;color:#9c0006;">1.0105</div>
<div class="c" style="left:1358px;top:563px;width:71px;text-align:right;color:#9c0006;">1.0146</div>
<div class="c" style="left:1505px;top:563px;width:70px;text-align:right;color:#006100;">0.995</div>
<div class="c" style="left:1284px;top:563px;width:71px;text-align:right;color:#222;">27686</div>
<div class="c" style="left:1432px;top:563px;width:70px;text-align:right;color:#222;">28231</div>
<div class="c" style="left:1644px;top:563px;width:91px;text-align:right;color:#9c0006;">39.5</div>
<svg style="position:absolute;left:1285px;top:563px;" width="7" height="7" viewBox="0 0 7 7"><path d="M0 0H7L0 7Z" fill="#008000"/></svg>
<svg style="position:absolute;left:1433px;top:563px;" width="7" height="7" viewBox="0 0 7 7"><path d="M0 0H7L0 7Z" fill="#008000"/></svg>
<div class="c" style="left:36px;top:593px;width:106px;text-align:center;color:#222;letter-spacing:1.3px;text-indent:1px">2021/8/30</div>
<div class="c" style="left:141px;top:593px;width:89px;text-align:center;color:#222;letter-spacing:0.1px">27,867.60</div>
<div class="c" style="left:229px;top:593px;width:89px;text-align:center;color:#222;letter-spacing:0.1px">27,921.55</div>
<div class="c" style="left:317px;top:593px;width:89px;text-align:center;color:#222;letter-spacing:0.1px">27,656.63</div>
<div class="c" style="left:405px;top:593px;width:95px;text-align:center;color:#222;letter-spacing:0.1px">27,789.29</div>
<div class="c" style="left:499px;top:593px;width:87px;text-align:center;color:#222;">148.15</div>
<div class="c" style="left:585px;top:593px;width:87px;text-align:center;color:#222;">0.5</div>
<div class="c" style="left:671px;top:593px;width:127px;text-align:center;color:#222;">802,632,900</div>
<div class="c" style="left:797px;top:593px;width:78px;text-align:center;color:#006100;">陰</div>
<div class="c" style="left:874px;top:593px;width:63px;text-align:center;color:#222;">1</div>
<div class="c" style="left:936px;top:593px;width:114px;text-align:right;color:#222;">148.15</div>
<div class="c" style="left:1133px;top:593px;width:73px;text-align:right;color:#222;">27726</div>
<div class="c" style="left:1209px;top:593px;width:72px;text-align:right;color:#9c0006;">1.0023</div>
<div class="c" style="left:1358px;top:593px;width:71px;text-align:right;color:#9c0006;">1.0041</div>
<div class="c" style="left:1505px;top:593px;width:70px;text-align:right;color:#006100;">0.9838</div>
<div class="c" style="left:1284px;top:593px;width:71px;text-align:right;color:#222;">27676</div>
<div class="c" style="left:1432px;top:593px;width:70px;text-align:right;color:#222;">28247</div>
<div class="c" style="left:1644px;top:593px;width:91px;text-align:right;color:#006100;">44.8</div>
<svg style="position:absolute;left:1285px;top:593px;" width="7" height="7" viewBox="0 0 7 7"><path d="M0 0H7L0 7Z" fill="#008000"/></svg>
<svg style="position:absolute;left:1433px;top:593px;" width="7" height="7" viewBox="0 0 7 7"><path d="M0 0H7L0 7Z" fill="#008000"/></svg>
<div class="c" style="left:36px;top:623px;width:106px;text-align:center;color:#222;letter-spacing:1.3px;text-indent:1px">2021/8/27</div>
<div class="c" style="left:141px;top:623px;width:89px;text-align:center;color:#222;letter-spacing:0.1px">27,581.24</div>
<div class="c" style="left:229px;top:623px;width:89px;text-align:center;color:#222;letter-spacing:0.1px">27,670.66</div>
<div class="c" style="left:317px;top:623px;width:89px;text-align:center;color:#222;letter-spacing:0.1px">27,481.23</div>
<div class="c" style="left:405px;top:623px;width:95px;text-align:center;color:#222;letter-spacing:0.1px">27,641.14</div>
<div class="c" style="left:499px;top:623px;width:87px;text-align:center;color:#222;">-101.15</div>
<div class="c" style="left:585px;top:623px;width:87px;text-align:center;color:#222;">-0.4</div>
<div class="c" style="left:671px;top:623px;width:127px;text-align:center;color:#222;">763,483,100</div>
<div class="c" style="left:797px;top:623px;width:78px;text-align:center;color:#9c0006;">陽</div>
<div class="c" style="left:874px;top:623px;width:63px;text-align:center;color:#222;">1</div>
<div class="c" style="left:936px;top:623px;width:114px;text-align:right;color:#222;">-101.15</div>
<div class="c" style="left:1133px;top:623px;width:73px;text-align:right;color:#222;">27667</div>
<div class="c" style="left:1209px;top:623px;width:72px;text-align:right;color:#006100;">0.9991</div>
<div class="c" style="left:1358px;top:623px;width:71px;text-align:right;color:#006100;">0.9991</div>
<div class="c" style="left:1505px;top:623px;width:70px;text-align:right;color:#006100;">0.9779</div>
<div class="c" style="left:1284px;top:623px;width:71px;text-align:right;color:#222;">27667</div>
<div class="c" style="left:1432px;top:623px;width:70px;text-align:right;color:#222;">28266</div>
<div class="c" style="left:1644px;top:623px;width:91px;text-align:right;color:#006100;">43.6</div>
<svg style="position:absolute;left:1285px;top:623px;" width="7" height="7" viewBox="0 0 7 7"><path d="M0 0H7L0 7Z" fill="#008000"/></svg>
<svg style="position:absolute;left:1433px;top:623px;" width="7" height="7" viewBox="0 0 7 7"><path d="M0 0H7L0 7Z" fill="#008000"/></svg>
<div class="c" style="left:36px;top:653px;width:106px;text-align:center;color:#222;letter-spacing:1.3px;text-indent:1px">2021/8/26</div>
<div class="c" style="left:141px;top:653px;width:89px;text-align:center;color:#222;letter-spacing:0.1px">27,793.63</div>
<div class="c" style="left:229px;top:653px;width:89px;text-align:center;color:#222;letter-spacing:0.1px">27,828.28</div>
<div class="c" style="left:317px;top:653px;width:89px;text-align:center;color:#222;letter-spacing:0.1px">27,684.50</div>
<div class="c" style="left:405px;top:653px;width:95px;text-align:center;color:#222;letter-spacing:0.1px">27,742.29</div>
<div class="c" style="left:499px;top:653px;width:87px;text-align:center;color:#222;">17.49</div>
<div class="c" style="left:585px;top:653px;width:87px;text-align:center;color:#222;">0.1</div>
<div class="c" style="left:671px;top:653px;width:127px;text-align:center;color:#222;">733,452,500</div>
<div class="c" style="left:797px;top:653px;width:78px;text-align:center;color:#006100;">陰</div>
<div class="c" style="left:874px;top:653px;width:63px;text-align:center;color:#222;">2</div>
<div class="c" style="left:936px;top:653px;width:114px;text-align:right;color:#222;">10.19</div>
<div class="c" style="left:1133px;top:653px;width:73px;text-align:right;color:#222;">27541</div>
<div class="c" style="left:1209px;top:653px;width:72px;text-align:right;color:#9c0006;">1.0073</div>
<div class="c" style="left:1358px;top:653px;width:71px;text-align:right;color:#9c0006;">1.0031</div>
<div class="c" style="left:1505px;top:653px;width:70px;text-align:right;color:#006100;">0.9808</div>
<div class="c" style="left:1284px;top:653px;width:71px;text-align:right;color:#222;">27656</div>
<div class="c" style="left:1432px;top:653px;width:70px;text-align:right;color:#222;">28286</div>
<div class="c" style="left:1580px;top:653px;width:66px;text-align:left;overflow:visible;color:#1a1a1a;">下降</div>
<div class="c" style="left:1644px;top:653px;width:91px;text-align:right;color:#006100;">43.8</div>
<svg style="position:absolute;left:1285px;top:653px;" width="7" height="7" viewBox="0 0 7 7"><path d="M0 0H7L0 7Z" fill="#008000"/></svg>
<svg style="position:absolute;left:1433px;top:653px;" width="7" height="7" viewBox="0 0 7 7"><path d="M0 0H7L0 7Z" fill="#008000"/></svg>
<div class="c" style="left:36px;top:683px;width:106px;text-align:center;color:#222;letter-spacing:1.3px;text-indent:1px">2021/8/25</div>
<div class="c" style="left:141px;top:683px;width:89px;text-align:center;color:#222;letter-spacing:0.1px">27,768.13</div>
<div class="c" style="left:229px;top:683px;width:89px;text-align:center;color:#222;letter-spacing:0.1px">27,897.72</div>
<div class="c" style="left:317px;top:683px;width:89px;text-align:center;color:#222;letter-spacing:0.1px">27,684.05</div>
<div class="c" style="left:405px;top:683px;width:95px;text-align:center;color:#222;letter-spacing:0.1px">27,724.80</div>
<div class="c" style="left:499px;top:683px;width:87px;text-align:center;color:#222;">-7.3</div>
<div class="c" style="left:585px;top:683px;width:87px;text-align:center;color:#222;">0</div>
<div class="c" style="left:671px;top:683px;width:127px;text-align:center;color:#222;">807,829,600</div>
<div class="c" style="left:797px;top:683px;width:78px;text-align:center;color:#006100;">陰</div>
<div class="c" style="left:874px;top:683px;width:63px;text-align:center;color:#222;">1</div>
<div class="c" style="left:936px;top:683px;width:114px;text-align:right;color:#222;">-7.3</div>
<div class="c" style="left:1133px;top:683px;width:73px;text-align:right;color:#222;">27449</div>
<div class="c" style="left:1209px;top:683px;width:72px;text-align:right;color:#9c0006;">1.01</div>
<div class="c" style="left:1358px;top:683px;width:71px;text-align:right;color:#9c0006;">1.0026</div>
<div class="c" style="left:1505px;top:683px;width:70px;text-align:right;color:#006100;">0.9795</div>
<div class="c" style="left:1284px;top:683px;width:71px;text-align:right;color:#222;">27653</div>
<div class="c" style="left:1432px;top:683px;width:70px;text-align:right;color:#222;">28304</div>
<div class="c" style="left:1580px;top:683px;width:66px;text-align:left;overflow:visible;color:#1a1a1a;">下降</div>
<div class="c" style="left:1644px;top:683px;width:91px;text-align:right;color:#006100;">43.8</div>
<svg style="position:absolute;left:1285px;top:683px;" width="7" height="7" viewBox="0 0 7 7"><path d="M0 0H7L0 7Z" fill="#008000"/></svg>
<svg style="position:absolute;left:1433px;top:683px;" width="7" height="7" viewBox="0 0 7 7"><path d="M0 0H7L0 7Z" fill="#008000"/></svg>
<div class="c" style="left:36px;top:713px;width:106px;text-align:center;color:#222;letter-spacing:1.3px;text-indent:1px">2021/8/24</div>
<div class="c" style="left:141px;top:713px;width:89px;text-align:center;color:#222;letter-spacing:0.1px">27,653.23</div>
<div class="c" style="left:229px;top:713px;width:89px;text-align:center;color:#222;letter-spacing:0.1px">27,817.89</div>
<div class="c" style="left:317px;top:713px;width:89px;text-align:center;color:#222;letter-spacing:0.1px">27,653.23</div>
<div class="c" style="left:405px;top:713px;width:95px;text-align:center;color:#222;letter-spacing:0.1px">27,732.10</div>
<div class="c" style="left:499px;top:713px;width:87px;text-align:center;color:#222;">237.86</div>
<div class="c" style="left:585px;top:713px;width:87px;text-align:center;color:#222;">0.9</div>
<div class="c" style="left:671px;top:713px;width:127px;text-align:center;color:#222;">805,621,700</div>
<div class="c" style="left:797px;top:713px;width:78px;text-align:center;color:#9c0006;">陽</div>
<div class="c" style="left:874px;top:713px;width:63px;text-align:center;color:#222;">2</div>
<div class="c" style="left:936px;top:713px;width:114px;text-align:right;color:#222;">718.85</div>
<div class="c" style="left:1133px;top:713px;width:73px;text-align:right;color:#222;">27421</div>
<div class="c" style="left:1209px;top:713px;width:72px;text-align:right;color:#9c0006;">1.0113</div>
<div class="c" style="left:1358px;top:713px;width:71px;text-align:right;color:#9c0006;">1.0025</div>
<div class="c" style="left:1505px;top:713px;width:70px;text-align:right;color:#006100;">0.979</div>
<div class="c" style="left:1284px;top:713px;width:71px;text-align:right;color:#222;">27664</div>
<div class="c" style="left:1432px;top:713px;width:70px;text-align:right;color:#222;">28328</div>
<div class="c" style="left:1580px;top:713px;width:66px;text-align:left;overflow:visible;color:#1a1a1a;">下降</div>
<div class="c" style="left:1644px;top:713px;width:91px;text-align:right;color:#006100;">43.1</div>
<svg style="position:absolute;left:1285px;top:713px;" width="7" height="7" viewBox="0 0 7 7"><path d="M0 0H7L0 7Z" fill="#008000"/></svg>
<svg style="position:absolute;left:1433px;top:713px;" width="7" height="7" viewBox="0 0 7 7"><path d="M0 0H7L0 7Z" fill="#008000"/></svg>
<div class="c" style="left:36px;top:743px;width:106px;text-align:center;color:#222;letter-spacing:1.3px;text-indent:1px">2021/8/23</div>
<div class="c" style="left:141px;top:743px;width:89px;text-align:center;color:#222;letter-spacing:0.1px">27,193.10</div>
<div class="c" style="left:229px;top:743px;width:89px;text-align:center;color:#222;letter-spacing:0.1px">27,541.63</div>
<div class="c" style="left:317px;top:743px;width:89px;text-align:center;color:#222;letter-spacing:0.1px">27,193.10</div>
<div class="c" style="left:405px;top:743px;width:95px;text-align:center;color:#222;letter-spacing:0.1px">27,494.24</div>
<div class="c" style="left:499px;top:743px;width:87px;text-align:center;color:#222;">480.99</div>
<div class="c" style="left:585px;top:743px;width:87px;text-align:center;color:#222;">1.8</div>
<div class="c" style="left:671px;top:743px;width:127px;text-align:center;color:#222;">804,675,800</div>
<div class="c" style="left:797px;top:743px;width:78px;text-align:center;color:#9c0006;">陽</div>
<div class="c" style="left:874px;top:743px;width:63px;text-align:center;color:#222;">1</div>
<div class="c" style="left:936px;top:743px;width:114px;text-align:right;color:#222;">480.99</div>
<div class="c" style="left:1133px;top:743px;width:73px;text-align:right;color:#222;">27360</div>
<div class="c" style="left:1209px;top:743px;width:72px;text-align:right;color:#9c0006;">1.0049</div>
<div class="c" style="left:1358px;top:743px;width:71px;text-align:right;color:#006100;">0.9931</div>
<div class="c" style="left:1505px;top:743px;width:70px;text-align:right;color:#006100;">0.9701</div>
<div class="c" style="left:1284px;top:743px;width:71px;text-align:right;color:#222;">27686</div>
<div class="c" style="left:1432px;top:743px;width:70px;text-align:right;color:#222;">28342</div>
<div class="c" style="left:1580px;top:743px;width:66px;text-align:left;overflow:visible;color:#1a1a1a;">下降</div>
<div class="c" style="left:1644px;top:743px;width:91px;text-align:right;color:#006100;">42.7</div>
<svg style="position:absolute;left:1285px;top:743px;" width="7" height="7" viewBox="0 0 7 7"><path d="M0 0H7L0 7Z" fill="#008000"/></svg>
<svg style="position:absolute;left:1433px;top:743px;" width="7" height="7" viewBox="0 0 7 7"><path d="M0 0H7L0 7Z" fill="#008000"/></svg>
<div class="c" style="left:36px;top:773px;width:106px;text-align:center;color:#222;letter-spacing:1.3px;text-indent:1px">2021/8/20</div>
<div class="c" style="left:141px;top:773px;width:89px;text-align:center;color:#222;letter-spacing:0.1px">27,238.45</div>
<div class="c" style="left:229px;top:773px;width:89px;text-align:center;color:#222;letter-spacing:0.1px">27,316.79</div>
<div class="c" style="left:317px;top:773px;width:89px;text-align:center;color:#222;letter-spacing:0.1px">26,954.81</div>
<div class="c" style="left:405px;top:773px;width:95px;text-align:center;color:#222;letter-spacing:0.1px">27,013.25</div>
<div class="c" style="left:499px;top:773px;width:87px;text-align:center;color:#222;">-267.92</div>
<div class="c" style="left:585px;top:773px;width:87px;text-align:center;color:#222;">-1</div>
<div class="c" style="left:671px;top:773px;width:127px;text-align:center;color:#222;">1,089,677,900</div>
<div class="c" style="left:797px;top:773px;width:78px;text-align:center;color:#006100;">陰</div>
<div class="c" style="left:874px;top:773px;width:63px;text-align:center;color:#222;">2</div>
<div class="c" style="left:936px;top:773px;width:114px;text-align:right;color:#222;">-572.66</div>
<div class="c" style="left:1133px;top:773px;width:73px;text-align:right;color:#222;">27364</div>
<div class="c" style="left:1209px;top:773px;width:72px;text-align:right;color:#006100;">0.9872</div>
<div class="c" style="left:1358px;top:773px;width:71px;text-align:right;color:#006100;">0.9741</div>
<div class="c" style="left:1505px;top:773px;width:70px;text-align:right;color:#006100;">0.9525</div>
<div class="c" style="left:1284px;top:773px;width:71px;text-align:right;color:#222;">27730</div>
<div class="c" style="left:1432px;top:773px;width:70px;text-align:right;color:#222;">28361</div>
<div class="c" style="left:1580px;top:773px;width:66px;text-align:left;overflow:visible;color:#1a1a1a;">下降</div>
<div class="c" style="left:1644px;top:773px;width:91px;text-align:right;color:#006100;">44.8</div>
<svg style="position:absolute;left:1285px;top:773px;" width="7" height="7" viewBox="0 0 7 7"><path d="M0 0H7L0 7Z" fill="#008000"/></svg>
<svg style="position:absolute;left:1433px;top:773px;" width="7" height="7" viewBox="0 0 7 7"><path d="M0 0H7L0 7Z" fill="#008000"/></svg>
<div class="c" style="left:36px;top:803px;width:106px;text-align:center;color:#222;letter-spacing:1.3px;text-indent:1px">2021/8/19</div>
<div class="c" style="left:141px;top:803px;width:89px;text-align:center;color:#222;letter-spacing:0.1px">27,398.58</div>
<div class="c" style="left:229px;top:803px;width:89px;text-align:center;color:#222;letter-spacing:0.1px">27,504.80</div>
<div class="c" style="left:317px;top:803px;width:89px;text-align:center;color:#222;letter-spacing:0.1px">27,255.58</div>
<div class="c" style="left:405px;top:803px;width:95px;text-align:center;color:#222;letter-spacing:0.1px">27,281.17</div>
<div class="c" style="left:499px;top:803px;width:87px;text-align:center;color:#222;">-304.74</div>
<div class="c" style="left:585px;top:803px;width:87px;text-align:center;color:#222;">-1.1</div>
<div class="c" style="left:671px;top:803px;width:127px;text-align:center;color:#222;">944,872,100</div>
<div class="c" style="left:797px;top:803px;width:78px;text-align:center;color:#006100;">陰</div>
<div class="c" style="left:874px;top:803px;width:63px;text-align:center;color:#222;">1</div>
<div class="c" style="left:936px;top:803px;width:114px;text-align:right;color:#222;">-304.74</div>
<div class="c" style="left:1133px;top:803px;width:73px;text-align:right;color:#222;">27557</div>
<div class="c" style="left:1209px;top:803px;width:72px;text-align:right;color:#006100;">0.99</div>
<div class="c" style="left:1358px;top:803px;width:71px;text-align:right;color:#006100;">0.9814</div>
<div class="c" style="left:1505px;top:803px;width:70px;text-align:right;color:#006100;">0.9611</div>
<div class="c" style="left:1284px;top:803px;width:71px;text-align:right;color:#222;">27799</div>
<div class="c" style="left:1432px;top:803px;width:70px;text-align:right;color:#222;">28386</div>
<div class="c" style="left:1580px;top:803px;width:66px;text-align:left;overflow:visible;color:#1a1a1a;">下降</div>
<div class="c" style="left:1644px;top:803px;width:91px;text-align:right;color:#006100;">46.6</div>
<svg style="position:absolute;left:1285px;top:803px;" width="7" height="7" viewBox="0 0 7 7"><path d="M0 0H7L0 7Z" fill="#008000"/></svg>
<svg style="position:absolute;left:1433px;top:803px;" width="7" height="7" viewBox="0 0 7 7"><path d="M0 0H7L0 7Z" fill="#008000"/></svg>
<div class="c" style="left:36px;top:833px;width:106px;text-align:center;color:#222;letter-spacing:1.3px;text-indent:1px">2021/8/18</div>
<div class="c" style="left:141px;top:833px;width:89px;text-align:center;color:#222;letter-spacing:0.1px">27,418.08</div>
<div class="c" style="left:229px;top:833px;width:89px;text-align:center;color:#222;letter-spacing:0.1px">27,671.57</div>
<div class="c" style="left:317px;top:833px;width:89px;text-align:center;color:#222;letter-spacing:0.1px">27,347.77</div>
<div class="c" style="left:405px;top:833px;width:95px;text-align:center;color:#222;letter-spacing:0.1px">27,585.91</div>
<div class="c" style="left:499px;top:833px;width:87px;text-align:center;color:#222;">161.44</div>
<div class="c" style="left:585px;top:833px;width:87px;text-align:center;color:#222;">0.6</div>
<div class="c" style="left:671px;top:833px;width:127px;text-align:center;color:#222;">841,159,900</div>
<div class="c" style="left:797px;top:833px;width:78px;text-align:center;color:#9c0006;">陽</div>
<div class="c" style="left:874px;top:833px;width:63px;text-align:center;color:#222;">1</div>
<div class="c" style="left:936px;top:833px;width:114px;text-align:right;color:#222;">161.44</div>
<div class="c" style="left:1133px;top:833px;width:73px;text-align:right;color:#222;">27704</div>
<div class="c" style="left:1209px;top:833px;width:72px;text-align:right;color:#006100;">0.9957</div>
<div class="c" style="left:1358px;top:833px;width:71px;text-align:right;color:#006100;">0.9905</div>
<div class="c" style="left:1505px;top:833px;width:70px;text-align:right;color:#006100;">0.9712</div>
<div class="c" style="left:1284px;top:833px;width:71px;text-align:right;color:#222;">27850</div>
<div class="c" style="left:1432px;top:833px;width:70px;text-align:right;color:#222;">28405</div>
<div class="c" style="left:1580px;top:833px;width:66px;text-align:left;overflow:visible;color:#1a1a1a;">下降</div>
<div class="c" style="left:1644px;top:833px;width:91px;text-align:right;color:#006100;">41.8</div>
<svg style="position:absolute;left:1285px;top:833px;" width="7" height="7" viewBox="0 0 7 7"><path d="M0 0H7L0 7Z" fill="#008000"/></svg>
<svg style="position:absolute;left:1433px;top:833px;" width="7" height="7" viewBox="0 0 7 7"><path d="M0 0H7L0 7Z" fill="#008000"/></svg>
<div class="c" style="left:36px;top:863px;width:106px;text-align:center;color:#222;letter-spacing:1.3px;text-indent:1px">2021/8/17</div>
<div class="c" style="left:141px;top:863px;width:89px;text-align:center;color:#222;letter-spacing:0.1px">27,666.94</div>
<div class="c" style="left:229px;top:863px;width:89px;text-align:center;color:#222;letter-spacing:0.1px">27,750.39</div>
<div class="c" style="left:317px;top:863px;width:89px;text-align:center;color:#222;letter-spacing:0.1px">27,424.47</div>
<div class="c" style="left:405px;top:863px;width:95px;text-align:center;color:#222;letter-spacing:0.1px">27,424.47</div>
<div class="c" style="left:499px;top:863px;width:87px;text-align:center;color:#222;">-98.72</div>
<div class="c" style="left:585px;top:863px;width:87px;text-align:center;color:#222;">-0.4</div>
<div class="c" style="left:671px;top:863px;width:127px;text-align:center;color:#222;">854,632,800</div>
<div class="c" style="left:797px;top:863px;width:78px;text-align:center;color:#006100;">陰</div>
<div class="c" style="left:874px;top:863px;width:63px;text-align:center;color:#222;">4</div>
<div class="c" style="left:936px;top:863px;width:114px;text-align:right;color:#222;">-650.36</div>
<div class="c" style="left:1133px;top:863px;width:73px;text-align:right;color:#222;">27801</div>
<div class="c" style="left:1209px;top:863px;width:72px;text-align:right;color:#006100;">0.9864</div>
<div class="c" style="left:1358px;top:863px;width:71px;text-align:right;color:#006100;">0.9842</div>
<div class="c" style="left:1505px;top:863px;width:70px;text-align:right;color:#006100;">0.9651</div>
<div class="c" style="left:1284px;top:863px;width:71px;text-align:right;color:#222;">27864</div>
<div class="c" style="left:1432px;top:863px;width:70px;text-align:right;color:#222;">28417</div>
<div class="c" style="left:1580px;top:863px;width:66px;text-align:left;overflow:visible;color:#1a1a1a;">下降</div>
<div class="c" style="left:1644px;top:863px;width:91px;text-align:right;color:#006100;">42.3</div>
<svg style="position:absolute;left:1285px;top:863px;" width="7" height="7" viewBox="0 0 7 7"><path d="M0 0H7L0 7Z" fill="#008000"/></svg>
<svg style="position:absolute;left:1433px;top:863px;" width="7" height="7" viewBox="0 0 7 7"><path d="M0 0H7L0 7Z" fill="#008000"/></svg>
<div class="c" style="left:36px;top:893px;width:106px;text-align:center;color:#222;letter-spacing:1.3px;text-indent:1px">2021/8/16</div>
<div class="c" style="left:141px;top:893px;width:89px;text-align:center;color:#222;letter-spacing:0.1px">27,806.11</div>
<div class="c" style="left:229px;top:893px;width:89px;text-align:center;color:#222;letter-spacing:0.1px">27,833.21</div>
<div class="c" style="left:317px;top:893px;width:89px;text-align:center;color:#222;letter-spacing:0.1px">27,427.38</div>
<div class="c" style="left:405px;top:893px;width:95px;text-align:center;color:#222;letter-spacing:0.1px">27,516.25</div>
<div class="c" style="left:499px;top:893px;width:87px;text-align:center;color:#222;">-460.9</div>
<div class="c" style="left:585px;top:893px;width:87px;text-align:center;color:#222;">-1.6</div>
<div class="c" style="left:671px;top:893px;width:127px;text-align:center;color:#222;">903,023,300</div>
<div class="c" style="left:797px;top:893px;width:78px;text-align:center;color:#006100;">陰</div>
<div class="c" style="left:874px;top:893px;width:63px;text-align:center;color:#222;">3</div>
<div class="c" style="left:936px;top:893px;width:114px;text-align:right;color:#222;">-551.64</div>
<div class="c" style="left:1133px;top:893px;width:73px;text-align:right;color:#222;">27894</div>
<div class="c" style="left:1209px;top:893px;width:72px;text-align:right;color:#006100;">0.9865</div>
<div class="c" style="left:1358px;top:893px;width:71px;text-align:right;color:#006100;">0.9865</div>
<div class="c" style="left:1505px;top:893px;width:70px;text-align:right;color:#006100;">0.9679</div>
<div class="c" style="left:1284px;top:893px;width:71px;text-align:right;color:#222;">27892</div>
<div class="c" style="left:1432px;top:893px;width:70px;text-align:right;color:#222;">28428</div>
<div class="c" style="left:1644px;top:893px;width:91px;text-align:right;color:#006100;">48</div>
<svg style="position:absolute;left:1285px;top:893px;" width="7" height="7" viewBox="0 0 7 7"><path d="M0 0H7L0 7Z" fill="#008000"/></svg>
<svg style="position:absolute;left:1433px;top:893px;" width="7" height="7" viewBox="0 0 7 7"><path d="M0 0H7L0 7Z" fill="#008000"/></svg>
<div class="c" style="left:36px;top:923px;width:106px;text-align:center;color:#222;letter-spacing:1.3px;text-indent:1px">2021/8/13</div>
<div class="c" style="left:141px;top:923px;width:89px;text-align:center;color:#222;letter-spacing:0.1px">28,038.96</div>
<div class="c" style="left:229px;top:923px;width:89px;text-align:center;color:#222;letter-spacing:0.1px">28,070.00</div>
<div class="c" style="left:317px;top:923px;width:89px;text-align:center;color:#222;letter-spacing:0.1px">27,949.33</div>
<div class="c" style="left:405px;top:923px;width:95px;text-align:center;color:#222;letter-spacing:0.1px">27,977.15</div>
<div class="c" style="left:499px;top:923px;width:87px;text-align:center;color:#222;">-37.87</div>
<div class="c" style="left:585px;top:923px;width:87px;text-align:center;color:#222;">-0.1</div>
<div class="c" style="left:671px;top:923px;width:127px;text-align:center;color:#222;">992,100,000</div>
<div class="c" style="left:797px;top:923px;width:78px;text-align:center;color:#006100;">陰</div>
<div class="c" style="left:874px;top:923px;width:63px;text-align:center;color:#222;">2</div>
<div class="c" style="left:936px;top:923px;width:114px;text-align:right;color:#222;">-90.74</div>
<div class="c" style="left:1133px;top:923px;width:73px;text-align:right;color:#222;">27955</div>
<div class="c" style="left:1209px;top:923px;width:72px;text-align:right;color:#9c0006;">1.0008</div>
<div class="c" style="left:1358px;top:923px;width:71px;text-align:right;color:#9c0006;">1.0018</div>
<div class="c" style="left:1505px;top:923px;width:70px;text-align:right;color:#006100;">0.9838</div>
<div class="c" style="left:1284px;top:923px;width:71px;text-align:right;color:#222;">27926</div>
<div class="c" style="left:1432px;top:923px;width:70px;text-align:right;color:#222;">28437</div>
<div class="c" style="left:1644px;top:923px;width:91px;text-align:right;color:#006100;">42.5</div>
<svg style="position:absolute;left:1285px;top:923px;" width="7" height="7" viewBox="0 0 7 7"><path d="M0 0H7L0 7Z" fill="#008000"/></svg>
<svg style="position:absolute;left:1433px;top:923px;" width="7" height="7" viewBox="0 0 7 7"><path d="M0 0H7L0 7Z" fill="#008000"/></svg>
<div class="c" style="left:36px;top:953px;width:106px;text-align:center;color:#222;letter-spacing:1.3px;text-indent:1px">2021/8/12</div>
<div class="c" style="left:141px;top:953px;width:89px;text-align:center;color:#222;letter-spacing:0.1px">28,177.20</div>
<div class="c" style="left:229px;top:953px;width:89px;text-align:center;color:#222;letter-spacing:0.1px">28,279.80</div>
<div class="c" style="left:317px;top:953px;width:89px;text-align:center;color:#222;letter-spacing:0.1px">28,006.31</div>
<div class="c" style="left:405px;top:953px;width:95px;text-align:center;color:#222;letter-spacing:0.1px">28,017.64</div>
<div class="c" style="left:499px;top:953px;width:87px;text-align:center;color:#222;">-52.87</div>
<div class="c" style="left:585px;top:953px;width:87px;text-align:center;color:#222;">-0.2</div>
<div class="c" style="left:671px;top:953px;width:127px;text-align:center;color:#222;">936,441,500</div>
<div class="c" style="left:797px;top:953px;width:78px;text-align:center;color:#006100;">陰</div>
<div class="c" style="left:874px;top:953px;width:63px;text-align:center;color:#222;">1</div>
<div class="c" style="left:936px;top:953px;width:114px;text-align:right;color:#222;">-52.87</div>
<div class="c" style="left:1133px;top:953px;width:73px;text-align:right;color:#222;">27905</div>
<div class="c" style="left:1209px;top:953px;width:72px;text-align:right;color:#9c0006;">1.004</div>
<div class="c" style="left:1358px;top:953px;width:71px;text-align:right;color:#9c0006;">1.0023</div>
<div class="c" style="left:1505px;top:953px;width:70px;text-align:right;color:#006100;">0.985</div>
<div class="c" style="left:1284px;top:953px;width:71px;text-align:right;color:#222;">27952</div>
<div class="c" style="left:1432px;top:953px;width:70px;text-align:right;color:#222;">28444</div>
<div class="c" style="left:1580px;top:953px;width:66px;text-align:left;overflow:visible;color:#1a1a1a;">下降</div>
<div class="c" style="left:1644px;top:953px;width:91px;text-align:right;color:#006100;">41.5</div>
<svg style="position:absolute;left:1285px;top:953px;" width="7" height="7" viewBox="0 0 7 7"><path d="M0 0H7L0 7Z" fill="#008000"/></svg>
<svg style="position:absolute;left:1433px;top:953px;" width="7" height="7" viewBox="0 0 7 7"><path d="M0 0H7L0 7Z" fill="#008000"/></svg>
<div style="left:1643px;top:381px;width:97px;height:33px;border:2px solid #217346;background:transparent"></div>
<div style="left:1645px;top:383px;width:93px;height:29px;border:1px solid #fff;background:transparent"></div>
<div style="left:1735px;top:409px;width:6px;height:6px;background:#217346;border:1px solid #fff;border-right:none;border-bottom:none"></div>
<div style="left:1894px;top:263px;width:26px;height:712px;background:#e6e6e6"></div>
<div style="left:1898px;top:266px;width:19px;height:18px;background:#fff;border:1px solid #c6c6c6"></div>
<svg style="position:absolute;left:1901px;top:269px;" width="13" height="10" viewBox="0 0 13 10"><path d="M1.5 8L6.5 2.5L11.5 8Z" fill="#555"/></svg>
<div style="left:1898px;top:285px;width:19px;height:36px;background:#fff;border:1px solid #c6c6c6"></div>
<div style="left:1898px;top:960px;width:19px;height:15px;background:#fff;border:1px solid #c6c6c6"></div>
<svg style="position:absolute;left:1901px;top:963px;" width="13" height="10" viewBox="0 0 13 10"><path d="M1.5 2L6.5 7.5L11.5 2Z" fill="#555"/></svg>
<div style="left:1894px;top:292px;width:1px;height:683px;background:#c6c6c6"></div>
<div style="left:0px;top:975px;width:1920px;height:29px;background:#e6e6e6"></div>
<div style="left:0px;top:975px;width:1920px;height:1px;background:#c6c6c6"></div>
<div style="left:0px;top:1003px;width:1920px;height:1px;background:#c6c6c6"></div>
<svg style="position:absolute;left:25px;top:983px;" width="12" height="14" viewBox="0 0 12 14"><path d="M8.5 2.5L3 7L8.5 11.5Z" fill="#217346"/></svg>
<svg style="position:absolute;left:52px;top:983px;" width="12" height="14" viewBox="0 0 12 14"><path d="M3.5 2.5L9 7L3.5 11.5Z" fill="#217346"/></svg>
<div class="t" style="left:77px;top:980px;font-size:16px;color:#217346;">...</div>
<div style="left:100px;top:978px;width:1px;height:22px;background:#b0b0b0"></div>
<div style="left:103px;top:978px;width:115px;height:22px;background:#ffff00"></div>
<div class="t" id="m42" style="left:116px;top:978px;font-size:16px;color:#222;;transform:scaleX(0.8036);transform-origin:0 0;">サイコロジカル</div>
<div style="left:223px;top:978px;width:52px;height:22px;background:#ffff00"></div>
<div class="t" id="m43" style="left:234px;top:978px;font-size:16px;color:#222;;transform:scaleX(1.0685);transform-origin:0 0;">RSI</div>
<div style="left:280px;top:978px;width:105px;height:22px;background:#ffff00"></div>
<div class="t" id="m44" style="left:290px;top:978px;font-size:16px;color:#222;;transform:scaleX(0.8958);transform-origin:0 0;">トレンド指標</div>
<div style="left:390px;top:978px;width:70px;height:22px;background:#ffff00"></div>
<div class="t" id="m45" style="left:399px;top:978px;font-size:16px;color:#222;;transform:scaleX(1.1042);transform-origin:0 0;">騰落率</div>
<div style="left:465px;top:978px;width:94px;height:22px;background:#ed7d31"></div>
<div class="t" id="m46" style="left:476px;top:978px;font-size:16px;color:#222;;transform:scaleX(1.1095);transform-origin:0 0;">20日騰落</div>
<div style="left:564px;top:978px;width:107px;height:22px;background:#ed7d31"></div>
<div class="t" id="m47" style="left:575px;top:978px;font-size:16px;color:#222;;transform:scaleX(0.9062);transform-origin:0 0;">累計　データ</div>
<div style="left:914px;top:978px;width:112px;height:22px;background:#ff0000"></div>
<div class="t" id="m48" style="left:926px;top:978px;font-size:16px;color:#fff;;transform:scaleX(0.9375);transform-origin:0 0;">マザーズ指標</div>
<div style="left:1031px;top:978px;width:49px;height:22px;background:#ff0000"></div>
<div class="t" id="m49" style="left:1041px;top:978px;font-size:16px;color:#fff;;transform:scaleX(1.0442);transform-origin:0 0;">JAQ</div>
<div style="left:220px;top:979px;width:1px;height:20px;background:#9a9a9a"></div>
<div style="left:277px;top:979px;width:1px;height:20px;background:#9a9a9a"></div>
<div style="left:387px;top:979px;width:1px;height:20px;background:#9a9a9a"></div>
<div style="left:462px;top:979px;width:1px;height:20px;background:#9a9a9a"></div>
<div style="left:561px;top:979px;width:1px;height:20px;background:#9a9a9a"></div>
<div style="left:674px;top:979px;width:1px;height:20px;background:#9a9a9a"></div>
<div style="left:1028px;top:979px;width:1px;height:20px;background:#9a9a9a"></div>
<div class="t" id="m50" style="left:686px;top:978px;font-size:16px;color:#444;;transform:scaleX(0.9375);transform-origin:0 0;">トレンド統計関連</div>
<div style="left:817px;top:975px;width:95px;height:25px;background:linear-gradient(#ffffff 0%,#fde4e4 55%,#f59a9a 100%);border-left:1px solid #c6c6c6;border-right:1px solid #c6c6c6"></div>
<div class="t" id="m51" style="left:831px;top:978px;font-size:16px;color:#217346;;transform:scaleX(1.1584);transform-origin:0 0;">日経225</div>
<div style="left:817px;top:998px;width:95px;height:2px;background:#217346"></div>
<div class="t" style="left:1085px;top:982px;font-size:16px;color:#217346;">...</div>
<svg style="position:absolute;left:1111px;top:979px;" width="22" height="22" viewBox="0 0 22 22"><circle cx="11" cy="11" r="9.5" fill="none" stroke="#666" stroke-width="1.2"/><path d="M11 5.5V16.5M5.5 11H16.5" stroke="#666" stroke-width="1.4"/></svg>
<div style="left:1148px;top:983px;width:3px;height:3px;background:#b0b0b0"></div>
<div style="left:1148px;top:988px;width:3px;height:3px;background:#b0b0b0"></div>
<div style="left:1148px;top:993px;width:3px;height:3px;background:#b0b0b0"></div>
<div style="left:1166px;top:980px;width:20px;height:19px;background:#fff;border:1px solid #c6c6c6"></div>
<svg style="position:absolute;left:1169px;top:983px;" width="13" height="13" viewBox="0 0 13 13"><path d="M9 2L3.5 6.5L9 11Z" fill="#555"/></svg>
<div style="left:1185px;top:980px;width:658px;height:19px;background:#fff;border:1px solid #c6c6c6"></div>
<div style="left:1843px;top:980px;width:33px;height:19px;background:#dadada"></div>
<div style="left:1876px;top:980px;width:19px;height:19px;background:#fff;border:1px solid #c6c6c6"></div>
<svg style="position:absolute;left:1879px;top:983px;" width="13" height="13" viewBox="0 0 13 13"><path d="M4 2L9.5 6.5L4 11Z" fill="#555"/></svg>
<div style="left:0px;top:1004px;width:1920px;height:26px;background:#f3f2f1"></div>
<div class="t" id="m52" style="left:9px;top:1010px;font-size:14.5px;color:#444;;transform:scaleX(1.0167);transform-origin:0 0;">準備完了</div>
<div style="left:1538px;top:1004px;width:50px;height:26px;background:#d2d2d2"></div>
<svg style="position:absolute;left:1553px;top:1007px;" width="20" height="20" viewBox="0 0 20 20"><g fill="none" stroke="#555" stroke-width="1.4"><rect x="1.5" y="1.5" width="16" height="16"/><path d="M7 1.5V17.5M12 1.5V17.5M1.5 7H17.5M1.5 12H17.5"/></g></svg>
<svg style="position:absolute;left:1603px;top:1007px;" width="20" height="20" viewBox="0 0 20 20"><g fill="none" stroke="#555" stroke-width="1.3"><rect x="1.5" y="1.5" width="16" height="16"/><rect x="4.5" y="4.5" width="10" height="10"/><path d="M6.5 8H12.5M6.5 11H12.5"/></g></svg>
<svg style="position:absolute;left:1653px;top:1007px;" width="20" height="20" viewBox="0 0 20 20"><g fill="none" stroke="#555" stroke-width="1.3"><path d="M1.5 1.5H17.5V17.5H1.5Z"/><path d="M6.5 1.5V11.5H1.5M6.5 6.5H11.5V1.5"/></g></svg>
<div style="left:1694px;top:1016px;width:11px;height:1px;background:#555"></div>
<div style="left:1711px;top:1016px;width:125px;height:1px;background:#b5b5b5"></div>
<div style="left:1771px;top:1010px;width:6px;height:13px;background:#6d6d6d"></div>
<div style="left:1842px;top:1016px;width:11px;height:1px;background:#555"></div>
<div style="left:1847px;top:1011px;width:1px;height:11px;background:#555"></div>
<div class="t" style="left:1868px;top:1010px;font-size:15px;color:#444;">100%</div>
<div style="left:0px;top:1030px;width:1920px;height:50px;background:#efe4cf"></div>
<svg style="position:absolute;left:20px;top:1045px;" width="20" height="20" viewBox="0 0 20 20"><path d="M0 2.8L8 1.7V9.4H0ZM9 1.5L20 0V9.4H9ZM0 10.5H8V18.3L0 17.2ZM9 10.5H20V20L9 18.5Z" fill="#000"/></svg>
<div style="left:60px;top:1030px;width:429px;height:50px;background:#fff;border:1px solid #c8c8c8;border-bottom:none;border-right:none"></div>
<svg style="position:absolute;left:75px;top:1044px;" width="22" height="22" viewBox="0 0 22 22"><circle cx="13" cy="8.5" r="6.5" fill="none" stroke="#222" stroke-width="1.6"/><path d="M8.5 13L1.5 20" stroke="#222" stroke-width="1.8"/></svg>
<div class="t" id="m53" style="left:110px;top:1047px;font-size:16.5px;color:#333;;transform:scaleX(0.9346);transform-origin:0 0;">ここに入力して検索</div>
<svg style="position:absolute;left:508px;top:1044px;" width="22" height="22" viewBox="0 0 22 22"><circle cx="11" cy="11" r="8.5" fill="none" stroke="#111" stroke-width="2.6"/></svg>
<svg style="position:absolute;left:568px;top:1043px;" width="24" height="24" viewBox="0 0 24 24"><g fill="none" stroke="#222" stroke-width="1.6"><path d="M1 3H16M1 20H16M3.5 6V17M13.5 6V17M3.5 10.5H13.5"/><path d="M21 2V7M21 11V13M21 16V22"/></g></svg>
<svg style="position:absolute;left:628px;top:1040px;" width="30" height="28" viewBox="0 0 30 28"><path d="M1 4H11L13 7H29V24H1Z" fill="#e8b640"/><path d="M1 9H29V25H1Z" fill="#f7d36c"/><path d="M9 25V17H21V25H18V20H12V25Z" fill="#2e8fd8"/></svg>
<div style="left:618px;top:1077px;width:51px;height:3px;background:#0078d7"></div>
<svg style="position:absolute;left:690px;top:1039px;" width="30" height="30" viewBox="0 0 30 30"><path d="M8 9V6a7 5 0 0 1 14 0V9" fill="none" stroke="#333" stroke-width="2.2"/><rect x="2" y="9" width="26" height="20" rx="2" fill="#333"/><rect x="10" y="14" width="4.5" height="4.5" fill="#f25022"/><rect x="15.5" y="14" width="4.5" height="4.5" fill="#7fba00"/><rect x="10" y="19.5" width="4.5" height="4.5" fill="#00a4ef"/><rect x="15.5" y="19.5" width="4.5" height="4.5" fill="#ffb900"/></svg>
<svg style="position:absolute;left:752px;top:1040px;" width="31" height="28" viewBox="0 0 31 28"><path d="M1 10L15.5 1L30 10V27H1Z" fill="#0f6cbd"/><path d="M1 11H30V27H1Z" fill="#3aa0f3"/><path d="M1 11L15.5 20L30 11" fill="#d8ebfa"/><path d="M1 27L15.5 17L30 27Z" fill="#2a8ae0"/></svg>
<svg style="position:absolute;left:815px;top:1040px;" width="30" height="30" viewBox="0 0 30 30"><rect x="0" y="0" width="30" height="30" fill="#f05a3c"/><circle cx="15" cy="15" r="10" fill="none" stroke="#fff" stroke-width="2.4"/><circle cx="15" cy="13" r="4" fill="#fff"/><path d="M8 22C10 17 20 17 22 22" fill="#fff"/></svg>
<svg style="position:absolute;left:876px;top:1040px;" width="30" height="30" viewBox="0 0 30 30"><rect x="1" y="1" width="28" height="28" rx="5" fill="#3a5fd0"/><text x="15" y="18" text-anchor="middle" font-size="16" fill="#fff" font-family="Liberation Sans" font-weight="bold">@</text><text x="15" y="27" text-anchor="middle" font-size="6" fill="#fff" font-family="Liberation Sans">menu</text></svg>
<svg style="position:absolute;left:938px;top:1039px;" width="31" height="31" viewBox="0 0 31 31"><circle cx="15.5" cy="15.5" r="14" fill="#1f8fd8"/><path d="M3 14C4 5 12 1.5 17 1.5C25 1.5 30 8 29.5 15C29 20 25 21 22 20C19 19 18 17 20 15C22 13 20 8 15 8C9 8 5 11 3 14Z" fill="#55d36a"/><path d="M3 14C4 5 12 1.5 17 1.5C21 1.5 24 3 26 5C22 3 14 3 9 8C6 11 5 14 3 14Z" fill="#2aa6de"/><circle cx="16" cy="17" r="5.5" fill="#efe4cf"/></svg>
<div style="left:929px;top:1077px;width:51px;height:3px;background:#0078d7"></div>
<svg style="position:absolute;left:1000px;top:1039px;" width="31" height="31" viewBox="0 0 31 31"><circle cx="17" cy="15.5" r="13" fill="#e0683f"/><path d="M17 2.5A13 13 0 0 1 30 15.5H17Z" fill="#ff8f6b"/><rect x="2" y="7" width="15" height="16" rx="2" fill="#c43e1c"/><text x="9.5" y="20" text-anchor="middle" font-size="12" fill="#fff" font-family="Liberation Sans" font-weight="bold">P</text></svg>
<div style="left:991px;top:1077px;width:51px;height:3px;background:#0078d7"></div>
<div style="left:1048px;top:1030px;width:57px;height:50px;background:#f4eee2"></div>
<svg style="position:absolute;left:1061px;top:1039px;" width="31" height="31" viewBox="0 0 31 31"><rect x="8" y="2" width="22" height="27" rx="2" fill="#21a366"/><rect x="8" y="2" width="22" height="9" fill="#33c481"/><rect x="8" y="20" width="22" height="9" fill="#107c41"/><path d="M19 2V29" stroke="#185c37" stroke-width="0.5"/><rect x="1" y="8" width="15" height="16" rx="2" fill="#107c41"/><text x="8.5" y="21" text-anchor="middle" font-size="12" fill="#fff" font-family="Liberation Sans" font-weight="bold">X</text></svg>
<div style="left:1048px;top:1077px;width:57px;height:3px;background:#0078d7"></div>
<div style="left:1105px;top:1077px;width:2px;height:3px;background:#7fb6e0"></div>
<svg style="position:absolute;left:1449px;top:1044px;" width="28" height="24" viewBox="0 0 28 24"><ellipse cx="13" cy="9" rx="9" ry="6" fill="#b9dcf5"/><ellipse cx="9" cy="11" rx="7" ry="5" fill="#8cc5ee"/><path d="M11 14L9 19M15 14L13.5 18" stroke="#3a9be0" stroke-width="2"/></svg>
<div class="t" style="left:1485px;top:1047px;font-size:17px;color:#111;">28°C</div>
<div class="t" style="left:1535px;top:1047px;font-size:17px;color:#111;">小雨</div>
<svg style="position:absolute;left:1590px;top:1048px;" width="18" height="12" viewBox="0 0 18 12"><path d="M2 10L9 3L16 10" fill="none" stroke="#111" stroke-width="1.5"/></svg>
<svg style="position:absolute;left:1618px;top:1046px;" width="24" height="18" viewBox="0 0 24 18"><path d="M5 15H19a4.5 4.5 0 0 0 0-9A6 6 0 0 0 8 5.5a5 5 0 0 0-3 9.5Z" fill="#b5b5b5" stroke="#222" stroke-width="1.2"/></svg>
<svg style="position:absolute;left:1647px;top:1047px;" width="24" height="16" viewBox="0 0 24 16"><rect x="3" y="3.5" width="16" height="10" fill="none" stroke="#111" stroke-width="1.4"/><rect x="5" y="5.5" width="12" height="6" fill="#111"/><path d="M19.5 6.5V10.5" stroke="#111" stroke-width="2"/><path d="M1 2H5" stroke="#111" stroke-width="1.2"/></svg>
<svg style="position:absolute;left:1679px;top:1045px;" width="22" height="20" viewBox="0 0 22 20"><g fill="none" stroke="#111" stroke-width="1.4"><path d="M2 17A15 15 0 0 1 17 2"/><path d="M6 17A11 11 0 0 1 17 6"/><path d="M10 17A7 7 0 0 1 17 10"/></g><circle cx="16" cy="16" r="1.8" fill="#111"/></svg>
<svg style="position:absolute;left:1707px;top:1044px;" width="24" height="22" viewBox="0 0 24 22"><path d="M2 8H6L11 3V19L6 14H2Z" fill="none" stroke="#111" stroke-width="1.3"/><path d="M14 8Q16 11 14 14M17 5.5Q21 11 17 16.5" fill="none" stroke="#111" stroke-width="1.3"/></svg>
<div class="t" style="left:1739px;top:1043px;font-size:25px;color:#111;">A</div>
<div class="t" style="left:1790px;top:1036px;font-size:15px;color:#111;">15:43</div>
<div class="t" style="left:1771px;top:1058px;font-size:15px;color:#111;">2021/09/11</div>
<svg style="position:absolute;left:1866px;top:1044px;" width="34" height="33" viewBox="0 0 34 33"><path d="M2.5 1.5H24.5V16.5H10L5.5 21V16.5H2.5Z" fill="#111"/><path d="M6.5 5.5H20.5M6.5 9H20.5M6.5 12.5H16" stroke="#efe4cf" stroke-width="1.3"/><circle cx="25" cy="22" r="8.5" fill="#e2dccf" stroke="#666" stroke-width="1.2"/><text x="25" y="26.5" text-anchor="middle" font-size="12.5" font-weight="bold" fill="#111" font-family="Liberation Sans">1</text></svg></body></html>
